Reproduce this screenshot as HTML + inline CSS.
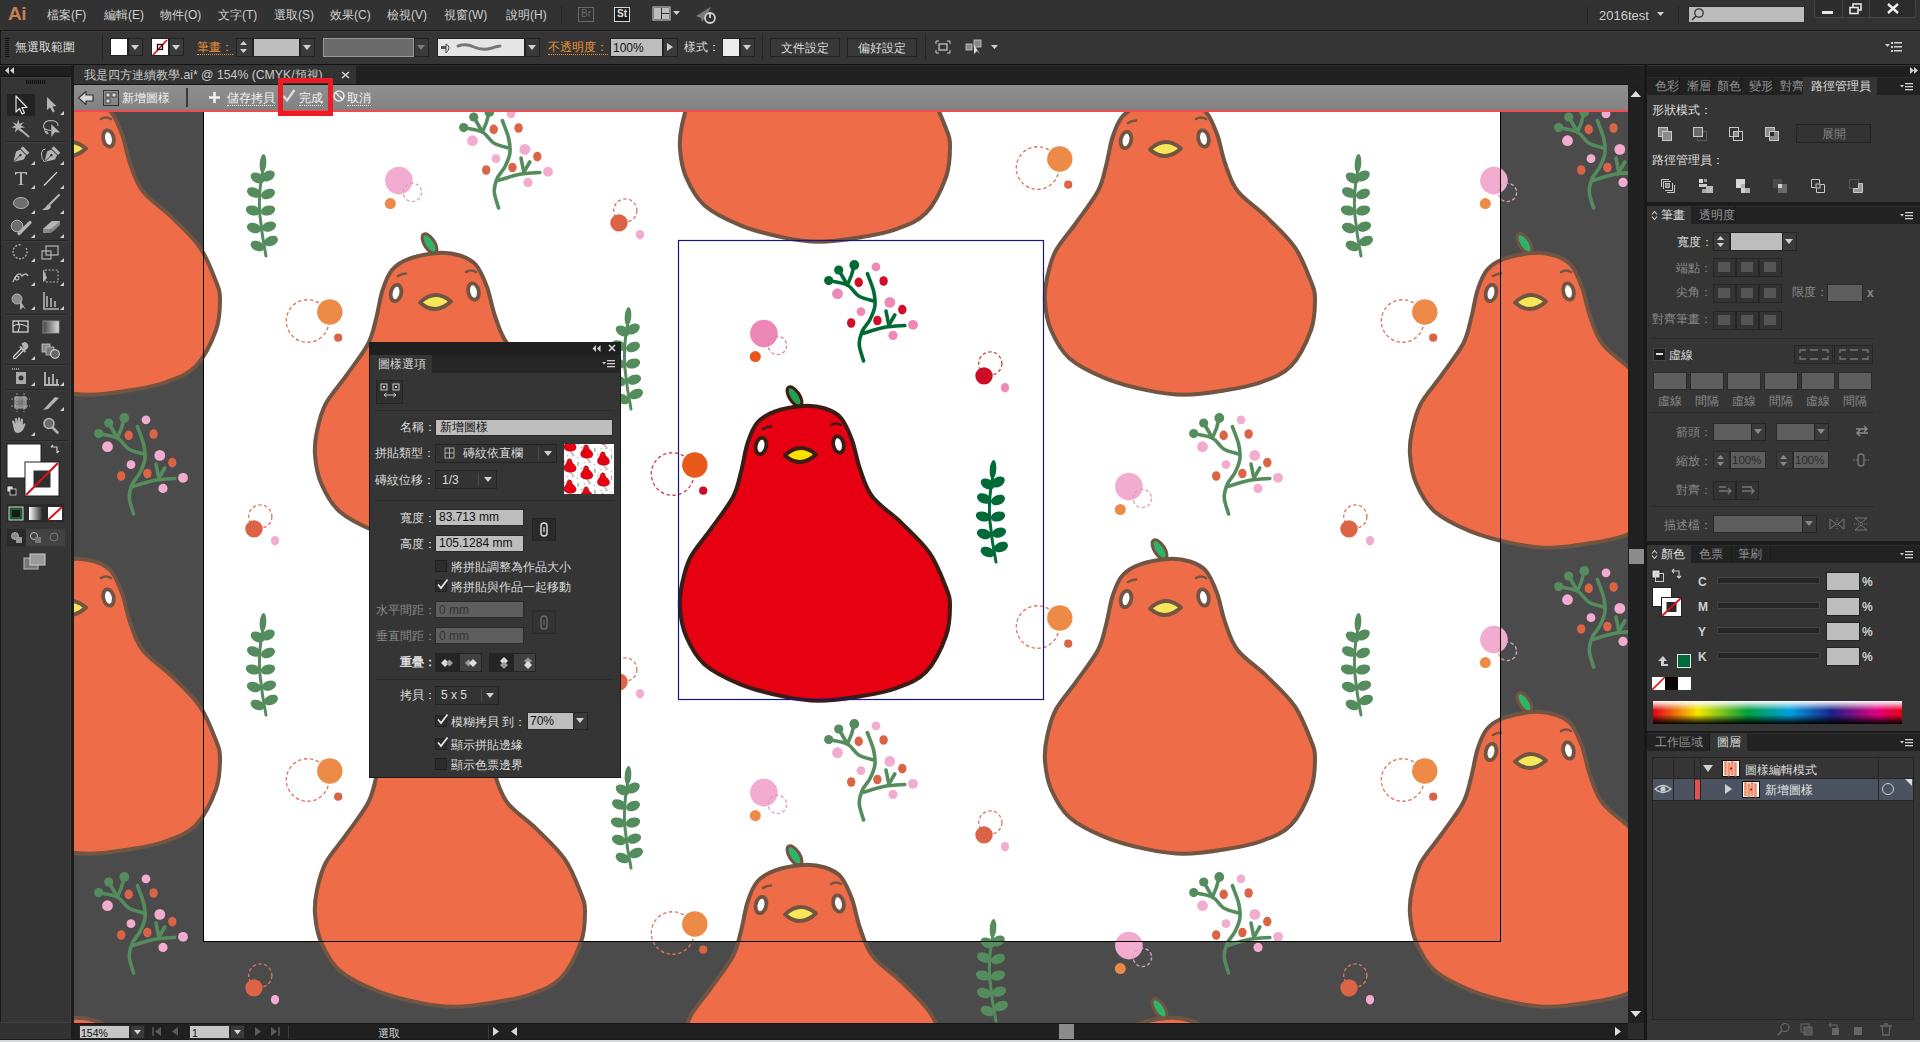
<!DOCTYPE html>
<html><head><meta charset="utf-8">
<style>
*{margin:0;padding:0;box-sizing:border-box}
html,body{width:1920px;height:1042px;overflow:hidden;background:#323232;font-family:"Liberation Sans",sans-serif;font-size:12px;color:#d0d0d0}
.a{position:absolute}
.t{position:absolute;white-space:nowrap;line-height:1}
</style></head><body>
<!-- MENU BAR -->
<div class="a" style="left:0;top:0;width:1920px;height:30px;background:#323232"></div>
<div class="a" style="left:0;top:30px;width:1920px;height:1px;background:#1b1b1b"></div>
<div class="t" style="left:8px;top:4px;font-size:19px;font-weight:bold;color:#c47f56;letter-spacing:-0.5px">Ai</div>
<div class="t" style="left:47px;top:9px;font-size:12px;color:#cfcfcf">檔案(F)</div>
<div class="t" style="left:104px;top:9px;font-size:12px;color:#cfcfcf">編輯(E)</div>
<div class="t" style="left:160px;top:9px;font-size:12px;color:#cfcfcf">物件(O)</div>
<div class="t" style="left:218px;top:9px;font-size:12px;color:#cfcfcf">文字(T)</div>
<div class="t" style="left:274px;top:9px;font-size:12px;color:#cfcfcf">選取(S)</div>
<div class="t" style="left:330px;top:9px;font-size:12px;color:#cfcfcf">效果(C)</div>
<div class="t" style="left:387px;top:9px;font-size:12px;color:#cfcfcf">檢視(V)</div>
<div class="t" style="left:444px;top:9px;font-size:12px;color:#cfcfcf">視窗(W)</div>
<div class="t" style="left:506px;top:9px;font-size:12px;color:#cfcfcf">說明(H)</div>
<div class="a" style="left:561px;top:6px;width:1px;height:18px;background:#262626"></div>
<div class="a" style="left:578px;top:7px;width:16px;height:15px;border:1px solid #6a6a6a"></div>
<div class="t" style="left:581px;top:9px;font-size:10px;color:#6a6a6a">Br</div>
<div class="a" style="left:614px;top:7px;width:16px;height:15px;border:1px solid #d6d6d6;background:#1e1e1e"></div>
<div class="t" style="left:617px;top:9px;font-size:10px;font-weight:bold;color:#e0e0e0">St</div>
<svg class="a" style="left:652px;top:6px" width="30" height="16"><rect x="1" y="1" width="17" height="13" fill="none" stroke="#d0d0d0" stroke-width="1"/><rect x="2" y="2" width="7" height="11" fill="#bdbdbd"/><rect x="10" y="2" width="7" height="5" fill="#bdbdbd"/><rect x="10" y="8" width="7" height="5" fill="#bdbdbd"/><path d="M21,5 L28,5 L24.5,9Z" fill="#d0d0d0"/></svg>
<svg class="a" style="left:695px;top:5px" width="24" height="20"><path d="M1,11 L6,8 L12,4 L16,2 L14,6 L10,12 L7,17 L6,13Z" fill="#7a7a7a"/><circle cx="15" cy="13" r="5" fill="none" stroke="#cfcfcf" stroke-width="1.8"/><path d="M15,7 L15,13" stroke="#cfcfcf" stroke-width="1.8"/></svg>
<div class="a" style="left:1587px;top:6px;width:1px;height:18px;background:#262626"></div>
<div class="t" style="left:1599px;top:9px;font-size:13px;color:#cfcfcf">2016test</div>
<svg class="a" style="left:1657px;top:12px" width="8" height="6"><path d="M0,0 L7,0 L3.5,4Z" fill="#cfcfcf"/></svg>
<div class="a" style="left:1678px;top:6px;width:1px;height:18px;background:#262626"></div>
<div class="a" style="left:1688px;top:6px;width:117px;height:17px;background:#bcbcbc;border:1px solid #2a2a2a"></div>
<svg class="a" style="left:1690px;top:7px" width="16" height="16"><circle cx="9" cy="6" r="4.2" fill="none" stroke="#333" stroke-width="1.3"/><path d="M6,9 L2,13" stroke="#333" stroke-width="1.5"/></svg>
<div class="a" style="left:1814px;top:0;width:102px;height:18px;background:#2c2c2c;border:1px solid #454545;border-top:none;border-radius:0 0 3px 3px"></div>
<div class="a" style="left:1842px;top:0;width:1px;height:17px;background:#454545"></div>
<div class="a" style="left:1869px;top:0;width:1px;height:17px;background:#454545"></div>
<div class="a" style="left:1822px;top:11px;width:11px;height:3px;background:#e6e6e6"></div>
<svg class="a" style="left:1849px;top:3px" width="14" height="12"><rect x="4" y="1" width="8" height="6" fill="none" stroke="#e6e6e6" stroke-width="1.6"/><rect x="1" y="4.5" width="8" height="6" fill="#2c2c2c" stroke="#e6e6e6" stroke-width="1.6"/></svg>
<svg class="a" style="left:1886px;top:3px" width="14" height="12"><path d="M2,1 L12,10 M12,1 L2,10" stroke="#f0f0f0" stroke-width="2.4"/></svg>
<!-- CONTROL BAR -->
<div class="a" style="left:0;top:31px;width:1920px;height:33px;background:#353535"></div>
<div class="a" style="left:0;top:31px;width:1920px;height:1px;background:#3d3d3d"></div>
<div class="a" style="left:0;top:64px;width:1920px;height:1px;background:#131313"></div>
<div class="a" style="left:0;top:31px;width:1px;height:33px;background:#1a1a1a"></div>
<div class="a" style="left:5px;top:38px;width:4px;height:19px;background:repeating-linear-gradient(#111 0 1px,transparent 1px 2px)"></div>
<div class="t" style="left:15px;top:41px;font-size:12px;color:#dcdcdc">無選取範圍</div>
<div class="a" style="left:102px;top:35px;width:1px;height:25px;background:#262626"></div>
<div class="a" style="left:110px;top:38px;width:18px;height:18px;background:#fff;border:1px solid #222"></div>
<div class="a" style="left:128px;top:38px;width:15px;height:18px;background:#3a3a3a;border:1px solid #222"></div>
<svg class="a" style="left:131px;top:45px" width="9" height="6"><path d="M0,0 L8,0 L4,5Z" fill="#d0d0d0"/></svg>
<div class="a" style="left:151px;top:38px;width:18px;height:18px;background:#fff;border:1px solid #222"></div>
<svg class="a" style="left:151px;top:38px" width="18" height="18"><path d="M2,17 L16,2" stroke="#e01010" stroke-width="1.8"/><rect x="6.5" y="6.5" width="5" height="5" fill="none" stroke="#111" stroke-width="1.3"/></svg>
<div class="a" style="left:169px;top:38px;width:15px;height:18px;background:#3a3a3a;border:1px solid #222"></div>
<svg class="a" style="left:172px;top:45px" width="9" height="6"><path d="M0,0 L8,0 L4,5Z" fill="#d0d0d0"/></svg>
<div class="t" style="left:197px;top:41px;font-size:12px;color:#e8913a;border-bottom:1px dotted #e8913a;padding-bottom:1px">筆畫：</div>
<div class="a" style="left:236px;top:38px;width:17px;height:19px;background:#3a3a3a;border:1px solid #222"></div>
<svg class="a" style="left:239px;top:40px" width="10" height="15"><path d="M1,5 L8,5 L4.5,1Z M1,9 L8,9 L4.5,13Z" fill="#d0d0d0"/></svg>
<div class="a" style="left:253px;top:38px;width:47px;height:19px;background:#bdbdbd;border:1px solid #222"></div>
<div class="a" style="left:300px;top:38px;width:15px;height:19px;background:#3a3a3a;border:1px solid #222"></div>
<svg class="a" style="left:303px;top:45px" width="9" height="6"><path d="M0,0 L8,0 L4,5Z" fill="#d0d0d0"/></svg>
<div class="a" style="left:323px;top:38px;width:91px;height:19px;background:#6a6a6a;border:1px solid #9a9a9a"></div>
<div class="a" style="left:414px;top:38px;width:15px;height:19px;background:#3a3a3a;border:1px solid #222"></div>
<svg class="a" style="left:417px;top:45px" width="9" height="6"><path d="M0,0 L8,0 L4,5Z" fill="#7a7a7a"/></svg>
<div class="a" style="left:437px;top:38px;width:88px;height:19px;background:#e6e6e6;border:1px solid #222"></div>
<svg class="a" style="left:438px;top:39px" width="86" height="17"><path d="M3,10 L8,10 L8,7 L3,7Z" fill="#555"/><path d="M8,5 Q14,8 8,14 Z" fill="none" stroke="#444" stroke-width="1"/><path d="M20,7 Q28,4 36,8 Q44,12 54,9 Q60,7 62,7" fill="none" stroke="#777" stroke-width="3" stroke-linecap="round"/></svg>
<div class="a" style="left:525px;top:38px;width:15px;height:19px;background:#3a3a3a;border:1px solid #222"></div>
<svg class="a" style="left:528px;top:45px" width="9" height="6"><path d="M0,0 L8,0 L4,5Z" fill="#d0d0d0"/></svg>
<div class="t" style="left:548px;top:41px;font-size:12px;color:#e8913a;border-bottom:1px dotted #e8913a;padding-bottom:1px">不透明度：</div>
<div class="a" style="left:610px;top:38px;width:53px;height:19px;background:#bdbdbd;border:1px solid #222"></div>
<div class="t" style="left:613px;top:42px;font-size:12px;color:#111">100%</div>
<div class="a" style="left:663px;top:38px;width:15px;height:19px;background:#3a3a3a;border:1px solid #222"></div>
<svg class="a" style="left:667px;top:43px" width="7" height="9"><path d="M0,0 L6,4 L0,8Z" fill="#d0d0d0"/></svg>
<div class="t" style="left:684px;top:41px;font-size:12px;color:#dcdcdc">樣式：</div>
<div class="a" style="left:722px;top:38px;width:18px;height:19px;background:#ececec;border:1px solid #222"></div>
<div class="a" style="left:740px;top:38px;width:15px;height:19px;background:#3a3a3a;border:1px solid #222"></div>
<svg class="a" style="left:743px;top:45px" width="9" height="6"><path d="M0,0 L8,0 L4,5Z" fill="#d0d0d0"/></svg>
<div class="a" style="left:762px;top:35px;width:1px;height:25px;background:#262626"></div>
<div class="a" style="left:770px;top:38px;width:70px;height:19px;background:#383838;border:1px solid #222"></div>
<div class="t" style="left:781px;top:42px;font-size:12px;color:#dcdcdc">文件設定</div>
<div class="a" style="left:847px;top:38px;width:70px;height:19px;background:#383838;border:1px solid #222"></div>
<div class="t" style="left:858px;top:42px;font-size:12px;color:#dcdcdc">偏好設定</div>
<div class="a" style="left:925px;top:35px;width:1px;height:25px;background:#262626"></div>
<svg class="a" style="left:935px;top:40px" width="16" height="14"><path d="M1,4 L1,1 L4,1 M12,1 L15,1 L15,4 M15,10 L15,13 L12,13 M4,13 L1,13 L1,10" fill="none" stroke="#cfcfcf" stroke-width="1"/><rect x="4" y="4" width="8" height="6" fill="none" stroke="#cfcfcf" stroke-width="1.2"/></svg>
<svg class="a" style="left:965px;top:39px" width="34" height="16"><rect x="1" y="5" width="6" height="6" fill="#888" stroke="#ccc" stroke-width="0.8"/><rect x="9" y="1" width="7" height="7" fill="#888" stroke="#ccc" stroke-width="0.8"/><path d="M9,6 L9,15 L12,12 L15,15Z" fill="#ddd"/><path d="M26,6 L33,6 L29.5,10Z" fill="#d0d0d0"/></svg>
<svg class="a" style="left:1884px;top:41px" width="20" height="12"><path d="M1,3 L6,3 L3.5,6Z" fill="#cfcfcf"/><rect x="7" y="1" width="2" height="2" fill="#cfcfcf"/><rect x="7" y="5" width="2" height="2" fill="#cfcfcf"/><rect x="7" y="9" width="2" height="2" fill="#cfcfcf"/><rect x="10" y="1" width="8" height="1.5" fill="#cfcfcf"/><rect x="10" y="5" width="8" height="1.5" fill="#cfcfcf"/><rect x="10" y="9" width="8" height="1.5" fill="#cfcfcf"/></svg>
<!-- DOC TAB ROW -->
<div class="a" style="left:0;top:65px;width:1646px;height:20px;background:#212121"></div>
<div class="a" style="left:0;top:65px;width:1646px;height:1px;background:#2e2e2e"></div>
<div class="a" style="left:74px;top:65px;width:282px;height:20px;background:#333333"></div>
<div class="t" style="left:84px;top:69px;font-size:12.25px;color:#c8c8c8">我是四方連續教學.ai* @ 154% (CMYK/預視)</div>
<svg class="a" style="left:341px;top:71px" width="9" height="8"><path d="M1,1 L8,7 M8,1 L1,7" stroke="#d8d8d8" stroke-width="1.5"/></svg>
<!-- pattern edit bar -->
<div class="a" style="left:74px;top:84px;width:1554px;height:1px;background:#151515"></div>
<div class="a" style="left:74px;top:85px;width:1554px;height:25px;background:linear-gradient(#8f8f8f,#828282)"></div>
<div class="a" style="left:74px;top:110px;width:1554px;height:2px;background:#f0494f"></div>
<svg class="a" style="left:77px;top:90px" width="19" height="16"><path d="M1.5,8 L9,1.5 L9,5 L16,5 L16,11 L9,11 L9,14.5Z" fill="#d6d6d6" stroke="#333" stroke-width="1.2" stroke-linejoin="round"/></svg>
<svg class="a" style="left:103px;top:90px" width="16" height="16"><rect x="0.5" y="0.5" width="15" height="15" fill="none" stroke="#333" stroke-width="1"/><rect x="3" y="3" width="4" height="4" fill="#ddd" stroke="#333" stroke-width="0.8"/><rect x="9" y="3" width="4" height="4" fill="#ddd" stroke="#333" stroke-width="0.8"/><rect x="3" y="9" width="4" height="4" fill="#ddd" stroke="#333" stroke-width="0.8"/></svg>
<div class="t" style="left:122px;top:92px;font-size:12px;color:#f2f2f2">新增圖樣</div>
<div class="a" style="left:186px;top:88px;width:2px;height:19px;background:#3a3a3a"></div>
<svg class="a" style="left:208px;top:91px" width="13" height="13"><path d="M6.5,1 L6.5,12 M1,6.5 L12,6.5" stroke="#f0f0f0" stroke-width="2.6"/></svg>
<div class="t" style="left:227px;top:92px;font-size:12px;color:#f2f2f2;border-bottom:1px dotted #f2f2f2;padding-bottom:1px">儲存拷貝</div>
<svg class="a" style="left:282px;top:88px" width="14" height="15"><path d="M1.5,8 L5,12.5 L12.5,2" fill="none" stroke="#e0e0e0" stroke-width="2.2"/></svg>
<div class="t" style="left:299px;top:92px;font-size:12px;color:#f2f2f2;border-bottom:1px dotted #f2f2f2;padding-bottom:1px">完成</div>
<svg class="a" style="left:332px;top:89px" width="14" height="14"><circle cx="7" cy="7" r="5" fill="none" stroke="#e8e8e8" stroke-width="1.6"/><path d="M3.5,3.5 L10.5,10.5" stroke="#e8e8e8" stroke-width="1.6"/></svg>
<div class="t" style="left:347px;top:92px;font-size:12px;color:#f2f2f2;border-bottom:1px dotted #f2f2f2;padding-bottom:1px">取消</div>
<div class="a" style="left:278px;top:78px;width:55px;height:38px;border:5px solid #ec1b24;z-index:5"></div>
<!-- LEFT TOOLBAR -->
<div class="a" style="left:0;top:65px;width:71px;height:12px;background:#1f1f1f"></div>
<div class="a" style="left:0;top:65px;width:71px;height:1px;background:#383838"></div>
<div class="a" style="left:0;top:76px;width:71px;height:1px;background:#151515"></div>
<svg class="a" style="left:4px;top:67px" width="12" height="8"><path d="M5,0 L1,3.5 L5,7Z M10,0 L6,3.5 L10,7Z" fill="#cfcfcf"/></svg>
<div class="a" style="left:0;top:77px;width:71px;height:946px;background:#353535;border:1px solid #404040;border-left:1px solid #1a1a1a"></div>
<div class="a" style="left:26px;top:80px;width:20px;height:4px;background:repeating-linear-gradient(90deg,#0e0e0e 0 1px,transparent 1px 2px)"></div>
<div class="a" style="left:7px;top:94px;width:28px;height:22px;background:#232323"></div>
<svg class="a" style="left:0;top:77px" width="71" height="520" viewBox="0 77 71 520">
<rect x="6" y="141" width="60" height="1" fill="#262626"/><rect x="6" y="142" width="60" height="1" fill="#3e3e3e"/>
<rect x="6" y="240" width="60" height="1" fill="#262626"/><rect x="6" y="241" width="60" height="1" fill="#3e3e3e"/>
<rect x="6" y="314" width="60" height="1" fill="#262626"/><rect x="6" y="315" width="60" height="1" fill="#3e3e3e"/>
<rect x="6" y="364" width="60" height="1" fill="#262626"/><rect x="6" y="365" width="60" height="1" fill="#3e3e3e"/>
<rect x="6" y="389" width="60" height="1" fill="#262626"/><rect x="6" y="390" width="60" height="1" fill="#3e3e3e"/>
<rect x="6" y="440" width="60" height="1" fill="#262626"/><rect x="6" y="441" width="60" height="1" fill="#3e3e3e"/>
<path d="M60,115 L64,115 L64,111Z" fill="#cfcfcf"/>
<path d="M31,165 L35,165 L35,161Z" fill="#cfcfcf"/>
<path d="M60,165 L64,165 L64,161Z" fill="#cfcfcf"/>
<path d="M31,189 L35,189 L35,185Z" fill="#cfcfcf"/>
<path d="M60,189 L64,189 L64,185Z" fill="#cfcfcf"/>
<path d="M31,214 L35,214 L35,210Z" fill="#cfcfcf"/>
<path d="M60,214 L64,214 L64,210Z" fill="#cfcfcf"/>
<path d="M31,238 L35,238 L35,234Z" fill="#cfcfcf"/>
<path d="M60,238 L64,238 L64,234Z" fill="#cfcfcf"/>
<path d="M31,262 L35,262 L35,258Z" fill="#cfcfcf"/>
<path d="M60,262 L64,262 L64,258Z" fill="#cfcfcf"/>
<path d="M31,286 L35,286 L35,282Z" fill="#cfcfcf"/>
<path d="M60,286 L64,286 L64,282Z" fill="#cfcfcf"/>
<path d="M31,310 L35,310 L35,306Z" fill="#cfcfcf"/>
<path d="M60,310 L64,310 L64,306Z" fill="#cfcfcf"/>
<path d="M31,360 L35,360 L35,356Z" fill="#cfcfcf"/>
<path d="M31,386 L35,386 L35,382Z" fill="#cfcfcf"/>
<path d="M60,386 L64,386 L64,382Z" fill="#cfcfcf"/>
<path d="M60,411 L64,411 L64,407Z" fill="#cfcfcf"/>
<path d="M31,436 L35,436 L35,432Z" fill="#cfcfcf"/>
<path d="M16,96 L16,112 L19.5,108.5 L22,114 L24.5,113 L22,107.5 L27,107.5Z" fill="none" stroke="#e0e0e0" stroke-width="1.2" stroke-linejoin="round"/>
<path d="M47,97 L47,110 L50,107.6 L53,112.5 L54.8,111.3 L52.5,106.6 L56.3,106Z" fill="#b4b4b4"/>
<path d="M21,130 L28.5,136.5" stroke="#b4b4b4" stroke-width="1.8" stroke-linecap="round"/>
<path d="M18.2,119.5 L19.6,124 L24,122 L21,125.6 L25,127.5 L20.6,128 L21.5,132.5 L18.2,129.3 L14.9,132.5 L15.8,128 L11.4,127.5 L15.4,125.6 L12.4,122 L16.8,124Z" fill="#b4b4b4"/>
<path d="M51,130.5 Q43,130 43.5,125.5 Q44.5,120.5 51,120.5 Q58.5,121 58,126 M44.5,128.5 Q45,134 48,133.5 Q47,131 45.5,131.5" fill="none" stroke="#b4b4b4" stroke-width="1.1"/>
<path d="M51.3,124.2 L60.2,132.5 L55,132.3 L51.3,137Z" fill="#b4b4b4"/>
<g transform="translate(20.0,155.5) rotate(45) scale(1.1)"><path d="M0,8.5 L-5,0 L-3.8,-4 L3.8,-4 L5,0Z" fill="#b4b4b4"/><rect x="-4.2" y="-7.8" width="8.4" height="3" fill="#b4b4b4"/><circle cx="0" cy="-0.5" r="1.2" fill="#333"/><path d="M0,8.5 L0,0.5" stroke="#333" stroke-width="0.8"/></g>
<g transform="translate(51.0,155.5) rotate(45) scale(1.1)"><path d="M0,8.5 L-5,0 L-3.8,-4 L3.8,-4 L5,0Z" fill="#b4b4b4"/><rect x="-4.2" y="-7.8" width="8.4" height="3" fill="#b4b4b4"/><circle cx="0" cy="-0.5" r="1.2" fill="#333"/><path d="M0,8.5 L0,0.5" stroke="#333" stroke-width="0.8"/></g>
<path d="M45.5,149 Q42,149 41.5,153 Q41,159 44.5,162" fill="none" stroke="#b4b4b4" stroke-width="1"/>
<path d="M15,172 L27,172 L27,175 L26.3,175 Q26,173.3 24,173.3 L22,173.3 L22,184 L23.5,184.5 L23.5,185 L18.5,185 L18.5,184.5 L20,184 L20,173.3 L18,173.3 Q16,173.3 15.7,175 L15,175Z" fill="#b4b4b4"/>
<path d="M44,185.5 L57,172.2" stroke="#e0e0e0" stroke-width="1.2"/>
<ellipse cx="21" cy="203" rx="7.5" ry="5.5" fill="#6e6e6e" stroke="#b4b4b4" stroke-width="1"/>
<path d="M42,209.5 Q45,209 46.5,206 Q48,203.5 50.5,205.5 Q51.5,208 48.5,209.5 Q45.5,210.5 42,209.5Z" fill="#b4b4b4"/><path d="M49.5,204.5 L59,195" stroke="#b4b4b4" stroke-width="2.2" stroke-linecap="round"/>
<circle cx="17" cy="226" r="5.8" fill="#6e6e6e" stroke="#b4b4b4" stroke-width="1"/><path d="M19,233.5 L30,222.5" stroke="#b4b4b4" stroke-width="3.2" stroke-linecap="round"/>
<path d="M43,233 L43,229 L52,221 L60,221 L60,225 L51,233Z" fill="#8a8a8a"/><path d="M43,229 L52,221 L60,221 L51,229Z" fill="#b4b4b4"/><path d="M51,229 L51,233" stroke="#555" stroke-width="0.8"/>
<path d="M26,248 A7,7 0 1 1 22,245" fill="none" stroke="#b4b4b4" stroke-width="1.3" stroke-dasharray="2 1.5"/>
<rect x="42" y="251" width="9" height="8" fill="none" stroke="#b4b4b4" stroke-width="1.2"/><rect x="46" y="246" width="12" height="9" fill="none" stroke="#b4b4b4" stroke-width="1.2"/>
<path d="M13,282 Q18,270 22,276 Q26,272 28,276" fill="none" stroke="#b4b4b4" stroke-width="1.5"/><circle cx="17" cy="278" r="2" fill="none" stroke="#e0e0e0"/>
<rect x="45" y="270" width="13" height="12" fill="none" stroke="#b4b4b4" stroke-width="1" stroke-dasharray="2 1.5"/><path d="M43,269 L43,282 L47,278Z" fill="#b4b4b4"/>
<circle cx="17" cy="299" r="5" fill="#8a8a8a" stroke="#b4b4b4"/><path d="M20,300 L20,310 L23,307 L26,310Z" fill="#b4b4b4"/>
<path d="M44,292 L44,309 L59,309 M47,296 L47,307 M51,298 L51,307 M55,301 L55,307" fill="none" stroke="#b4b4b4" stroke-width="1.6"/>
<rect x="13" y="321" width="15" height="11" fill="none" stroke="#e0e0e0" stroke-width="1.2"/><path d="M13,326 Q20,322 28,327 M18,321 Q21,327 18,332" fill="none" stroke="#e0e0e0" stroke-width="1"/>
<defs><linearGradient id="gr1"><stop offset="0" stop-color="#444"/><stop offset="1" stop-color="#ddd"/></linearGradient></defs><rect x="43" y="321" width="16" height="12" fill="url(#gr1)" stroke="#999" stroke-width="0.8"/>
<path d="M14,358.5 L13.5,356.5 L21.5,348.5 L23.5,350.5 L15.5,358.5Z" fill="none" stroke="#e0e0e0" stroke-width="1.1"/>
<path d="M20,346.5 L25.5,352 M22,344.5 Q24,342 26.5,344 Q28.5,346.5 26,348.5 L24,350" fill="#b4b4b4" stroke="#b4b4b4" stroke-width="2"/>
<rect x="42" y="344" width="8" height="8" fill="#8a8a8a" stroke="#ccc" stroke-width="0.8"/><rect x="46" y="347" width="8" height="8" fill="#777" stroke="#bbb" stroke-width="0.8"/><circle cx="55" cy="354" r="4.3" fill="#666" stroke="#ddd" stroke-width="1.1"/>
<rect x="16" y="372" width="10" height="12" fill="#aaa"/><circle cx="21" cy="378" r="2.5" fill="#333"/><path d="M12,369 L19,369" stroke="#bbb" stroke-width="1.5" stroke-dasharray="1 1"/>
<path d="M44,385 L59,385 M45,372 L45,384 M49,377 L49,384 M53,374 L53,384 M57,379 L57,384" fill="none" stroke="#b4b4b4" stroke-width="1.8"/>
<rect x="15" y="397" width="11" height="11" fill="#777" stroke="#b4b4b4" stroke-width="1"/><path d="M11,399 L30,399 M11,406 L30,406 M17,393 L17,412 M24,393 L24,412" stroke="#b4b4b4" stroke-width="0.8" stroke-dasharray="2 1"/>
<path d="M43,410 L55,397 L59,398 L48,409Z" fill="#b4b4b4"/>
<path d="M13,425 L12,421.5 Q12.5,420 14,421 L15.5,424 L15,419 Q15.5,417.5 17,418.5 L17.8,423 L18,418 Q19,416.5 20,418 L20.3,423 L21,419 Q22,418 23,419.3 L22.8,425 L24,423.5 Q25.5,423 25.5,424.5 L23,430 Q21,433 18,433 Q15,433 14,430Z" fill="#b4b4b4"/>
<circle cx="49" cy="423.5" r="5" fill="#6a6a6a" stroke="#b4b4b4" stroke-width="1.6"/><path d="M52.5,427.5 L57.5,432.5" stroke="#b4b4b4" stroke-width="2.6" stroke-linecap="round"/>
<rect x="7" y="444" width="34" height="34" fill="#fff" stroke="#222" stroke-width="1"/>
<rect x="25" y="462" width="34" height="34" fill="#fff" stroke="#222" stroke-width="1"/><rect x="33.5" y="470.5" width="17" height="17" fill="#2e2e2e"/>
<path d="M26,495 L58,463" stroke="#d41414" stroke-width="2.2"/>
<path d="M51,447 L57,447 L57,453 M51,447 L53,445 M57,453 L59,451" fill="none" stroke="#ccc" stroke-width="1.2"/>
<rect x="7" y="486" width="6" height="6" fill="#ddd" stroke="#222" stroke-width="0.8"/><rect x="10" y="489" width="6" height="6" fill="#222" stroke="#ddd" stroke-width="0.8"/>
<rect x="7" y="504" width="57" height="18" fill="#2a2a2a"/>
<rect x="9" y="507" width="14" height="13" fill="#1e5c34" stroke="#cfcfcf" stroke-width="1"/><rect x="12" y="510" width="8" height="7" fill="#1a1a1a"/>
<rect x="29" y="507" width="14" height="13" fill="url(#gr2)"/><defs><linearGradient id="gr2"><stop offset="0" stop-color="#fff"/><stop offset="1" stop-color="#222"/></linearGradient></defs>
<rect x="48" y="507" width="14" height="13" fill="#fff"/><path d="M48,520 L62,507" stroke="#d41414" stroke-width="2"/>
<rect x="7" y="529" width="58" height="17" fill="#424242"/><rect x="7" y="529" width="19" height="17" fill="#2a2a2a"/>
<circle cx="15" cy="536" r="3.5" fill="#888" stroke="#bbb" stroke-width="0.8"/><rect x="16" y="537" width="6" height="6" fill="#999"/>
<circle cx="34" cy="536" r="3.5" fill="none" stroke="#bbb" stroke-width="1"/><rect x="35" y="537" width="6" height="6" fill="#777"/>
<circle cx="54" cy="537" r="4" fill="none" stroke="#777" stroke-width="1"/>
<rect x="24" y="558" width="14" height="11" fill="#777" stroke="#bbb" stroke-width="1"/><rect x="30" y="554" width="15" height="11" fill="#999" stroke="#ccc" stroke-width="1"/>
</svg>
<div class="a" style="left:71px;top:64px;width:3px;height:978px;background:#1c1c1c"></div>
<!-- CANVAS -->
<svg width="1554" height="911" viewBox="74 112 1554 911" style="position:absolute;left:74px;top:112px;display:block">
<defs><g id="tc"><g transform="translate(1,166)">
<ellipse cx="115.5" cy="-9.5" rx="11" ry="5.2" transform="rotate(57 115.5 -9.5)" fill="#2eb46a" stroke="#725443" stroke-width="3"/>
<path d="M124.0,0.0 C115.6,0.5 103.2,2.9 95.5,5.7 C87.8,8.5 82.5,11.8 78.0,17.0 C73.5,22.2 71.3,28.8 68.6,37.0 C65.9,45.2 64.4,57.0 62.0,66.0 C59.6,75.0 59.0,81.5 54.0,91.0 C49.0,100.5 39.1,113.0 32.0,123.0 C24.9,133.0 16.4,141.8 11.6,151.0 C6.8,160.2 4.8,169.5 3.0,178.0 C1.2,186.5 0.3,193.3 1.0,202.0 C1.7,210.7 3.0,220.6 7.0,230.0 C11.1,239.4 16.2,250.1 25.3,258.2 C34.4,266.2 48.4,272.9 61.5,278.3 C74.6,283.7 90.7,287.6 103.8,290.4 C116.9,293.1 127.3,294.8 140.0,294.8 C152.7,294.8 167.2,292.6 180.0,290.5 C192.8,288.4 205.5,286.4 216.7,282.3 C227.8,278.2 238.5,274.9 246.9,266.2 C255.3,257.5 263.0,241.1 267.0,230.0 C271.0,218.9 271.0,207.8 271.0,199.7 C271.0,191.6 270.4,190.3 267.0,181.6 C263.6,172.9 258.3,158.1 250.9,147.3 C243.5,136.6 232.2,126.5 222.7,117.1 C213.1,107.7 200.5,100.0 193.6,91.0 C186.7,82.0 184.4,72.5 181.0,63.0 C177.6,53.5 176.2,42.5 173.0,34.0 C169.8,25.5 166.5,17.2 162.0,12.0 C157.5,6.8 152.3,4.5 146.0,2.5 C139.7,0.5 132.4,-0.5 124.0,0.0Z" fill="#ee6c48" stroke="#725443" stroke-width="4" stroke-linejoin="round"/>
<ellipse cx="82" cy="40" rx="5.2" ry="8.3" transform="rotate(12 82 40)" fill="#fff" stroke="#725443" stroke-width="3.8"/>
<ellipse cx="159.5" cy="38.5" rx="5.2" ry="8.3" transform="rotate(-12 159.5 38.5)" fill="#fff" stroke="#725443" stroke-width="3.8"/>
<path d="M106,49.5 Q121,35 137,48.5 Q121,63 106,49.5Z" fill="#f6e65a" stroke="#725443" stroke-width="3.8" stroke-linejoin="round"/>
<path d="M84,23 Q88,20.5 92,20.5" fill="none" stroke="#725443" stroke-width="2.6" stroke-linecap="round"/>
<path d="M152,19 Q157,16 162,19" fill="none" stroke="#725443" stroke-width="2.6" stroke-linecap="round"/>
</g>
<g fill="none" stroke="#558c5d" stroke-width="3.6" stroke-linecap="round">
<path d="M185.6,121.0 C184.9,118.3 181.5,109.8 181.3,104.8 C181.1,99.8 182.6,95.2 184.4,91.0 C186.2,86.8 189.8,84.0 191.9,79.8 C194.0,75.6 196.3,70.8 196.9,66.0 C197.5,61.2 196.8,56.4 195.6,51.0 C194.3,45.6 190.4,36.6 189.4,33.7"/>
<path d="M195.6,61.0 C193.1,60.2 185.1,58.7 180.7,56.0 C176.3,53.3 174.4,47.6 169.4,45.0 C164.4,42.4 153.8,41.3 150.7,40.6"/>
<path d="M169.4,45 L161.3,31"/><path d="M169.4,45 Q174,36 176,26"/>
<path d="M184.4,93.6 C188.2,92.5 199.8,88.6 206.9,87.3 C214.0,86.0 223.5,85.8 226.8,85.5"/>
<path d="M208,71 L210.6,84"/><path d="M216.8,75 L211.5,84"/>
</g>
<g fill="#558c5d"><circle cx="150.7" cy="40.6" r="4.6"/><circle cx="160.7" cy="30" r="4.6"/><circle cx="176.3" cy="25" r="4.9"/></g>
<g fill="#dc6446">
<ellipse cx="180.7" cy="42.4" rx="4.2" ry="4.8"/>
<ellipse cx="205.6" cy="41" rx="4.2" ry="4.8"/>
<ellipse cx="173.2" cy="83" rx="4.2" ry="4.8"/>
<ellipse cx="199.4" cy="80.5" rx="4.2" ry="4.8"/>
<ellipse cx="224.3" cy="69.6" rx="4.2" ry="4.8"/>
</g><g fill="#f2acd0">
<circle cx="198" cy="26.8" r="4.4"/>
<circle cx="159.5" cy="53.7" r="5.4"/>
<circle cx="211.8" cy="62.4" r="5.4"/>
<circle cx="183" cy="71.7" r="4.4"/>
<circle cx="235" cy="84.8" r="4.9"/>
<circle cx="215" cy="95.4" r="4.6"/>
</g>
<g fill="#558c5d">
<path d="M314.5,238 Q310,262 312,282 Q314,302 318,322" fill="none" stroke="#558c5d" stroke-width="3" stroke-linecap="round"/>
<ellipse cx="315" cy="229.5" rx="3.3" ry="9.5" transform="rotate(4 315 229.5)"/>
<ellipse cx="309.5" cy="244.0" rx="7.3" ry="4.9" transform="rotate(30 309.5 244.0)"/>
<ellipse cx="320.0" cy="242.0" rx="7.3" ry="4.9" transform="rotate(-30 320.0 242.0)"/>
<ellipse cx="306.0" cy="258.5" rx="7.3" ry="4.9" transform="rotate(22 306.0 258.5)"/>
<ellipse cx="320.0" cy="260.0" rx="7.3" ry="4.9" transform="rotate(-22 320.0 260.0)"/>
<ellipse cx="305.0" cy="276.5" rx="7.3" ry="4.9" transform="rotate(15 305.0 276.5)"/>
<ellipse cx="320.0" cy="276.5" rx="7.3" ry="4.9" transform="rotate(-15 320.0 276.5)"/>
<ellipse cx="306.0" cy="294.0" rx="7.3" ry="4.9" transform="rotate(18 306.0 294.0)"/>
<ellipse cx="321.0" cy="292.6" rx="7.3" ry="4.9" transform="rotate(-18 321.0 292.6)"/>
<ellipse cx="309.6" cy="312.0" rx="7.3" ry="4.9" transform="rotate(22 309.6 312.0)"/>
<ellipse cx="323.0" cy="307.0" rx="7.3" ry="4.9" transform="rotate(-22 323.0 307.0)"/>
</g>
<circle cx="85.9" cy="93.6" r="13.8" fill="#f2acd0"/>
<circle cx="99.4" cy="105.4" r="9.2" fill="none" stroke="#d8a4bc" stroke-width="1.35" stroke-dasharray="3.4 2.4"/>
<circle cx="77.3" cy="116.6" r="5.5" fill="#ee8a48"/>
<circle cx="312.3" cy="123.5" r="11.6" fill="none" stroke="#dc7660" stroke-width="1.35" stroke-dasharray="3.4 2.4"/>
<circle cx="306" cy="135.9" r="8.7" fill="#dc6446"/>
<ellipse cx="327" cy="147.7" rx="4.1" ry="4.8" fill="#f2acd0"/>
<circle cx="-5.4" cy="234" r="21.3" fill="none" stroke="#dc7660" stroke-width="1.35" stroke-dasharray="3.4 2.6"/>
<circle cx="16.8" cy="225" r="12.7" fill="#ee8a48"/>
<circle cx="25.2" cy="250.7" r="4.1" fill="#dc6446"/></g><g id="to"><g transform="translate(1,166)">
<ellipse cx="115.5" cy="-9.5" rx="11" ry="5.2" transform="rotate(57 115.5 -9.5)" fill="#23a04f" stroke="#3a1d14" stroke-width="3"/>
<path d="M124.0,0.0 C115.6,0.5 103.2,2.9 95.5,5.7 C87.8,8.5 82.5,11.8 78.0,17.0 C73.5,22.2 71.3,28.8 68.6,37.0 C65.9,45.2 64.4,57.0 62.0,66.0 C59.6,75.0 59.0,81.5 54.0,91.0 C49.0,100.5 39.1,113.0 32.0,123.0 C24.9,133.0 16.4,141.8 11.6,151.0 C6.8,160.2 4.8,169.5 3.0,178.0 C1.2,186.5 0.3,193.3 1.0,202.0 C1.7,210.7 3.0,220.6 7.0,230.0 C11.1,239.4 16.2,250.1 25.3,258.2 C34.4,266.2 48.4,272.9 61.5,278.3 C74.6,283.7 90.7,287.6 103.8,290.4 C116.9,293.1 127.3,294.8 140.0,294.8 C152.7,294.8 167.2,292.6 180.0,290.5 C192.8,288.4 205.5,286.4 216.7,282.3 C227.8,278.2 238.5,274.9 246.9,266.2 C255.3,257.5 263.0,241.1 267.0,230.0 C271.0,218.9 271.0,207.8 271.0,199.7 C271.0,191.6 270.4,190.3 267.0,181.6 C263.6,172.9 258.3,158.1 250.9,147.3 C243.5,136.6 232.2,126.5 222.7,117.1 C213.1,107.7 200.5,100.0 193.6,91.0 C186.7,82.0 184.4,72.5 181.0,63.0 C177.6,53.5 176.2,42.5 173.0,34.0 C169.8,25.5 166.5,17.2 162.0,12.0 C157.5,6.8 152.3,4.5 146.0,2.5 C139.7,0.5 132.4,-0.5 124.0,0.0Z" fill="#e60012" stroke="#3a1d14" stroke-width="4" stroke-linejoin="round"/>
<ellipse cx="82" cy="40" rx="5.2" ry="8.3" transform="rotate(12 82 40)" fill="#fff" stroke="#3a1d14" stroke-width="3.8"/>
<ellipse cx="159.5" cy="38.5" rx="5.2" ry="8.3" transform="rotate(-12 159.5 38.5)" fill="#fff" stroke="#3a1d14" stroke-width="3.8"/>
<path d="M106,49.5 Q121,35 137,48.5 Q121,63 106,49.5Z" fill="#ffe100" stroke="#3a1d14" stroke-width="3.8" stroke-linejoin="round"/>
<path d="M84,23 Q88,20.5 92,20.5" fill="none" stroke="#3a1d14" stroke-width="2.6" stroke-linecap="round"/>
<path d="M152,19 Q157,16 162,19" fill="none" stroke="#3a1d14" stroke-width="2.6" stroke-linecap="round"/>
</g>
<g fill="none" stroke="#006a35" stroke-width="3.6" stroke-linecap="round">
<path d="M185.6,121.0 C184.9,118.3 181.5,109.8 181.3,104.8 C181.1,99.8 182.6,95.2 184.4,91.0 C186.2,86.8 189.8,84.0 191.9,79.8 C194.0,75.6 196.3,70.8 196.9,66.0 C197.5,61.2 196.8,56.4 195.6,51.0 C194.3,45.6 190.4,36.6 189.4,33.7"/>
<path d="M195.6,61.0 C193.1,60.2 185.1,58.7 180.7,56.0 C176.3,53.3 174.4,47.6 169.4,45.0 C164.4,42.4 153.8,41.3 150.7,40.6"/>
<path d="M169.4,45 L161.3,31"/><path d="M169.4,45 Q174,36 176,26"/>
<path d="M184.4,93.6 C188.2,92.5 199.8,88.6 206.9,87.3 C214.0,86.0 223.5,85.8 226.8,85.5"/>
<path d="M208,71 L210.6,84"/><path d="M216.8,75 L211.5,84"/>
</g>
<g fill="#006a35"><circle cx="150.7" cy="40.6" r="4.6"/><circle cx="160.7" cy="30" r="4.6"/><circle cx="176.3" cy="25" r="4.9"/></g>
<g fill="#d00d28">
<ellipse cx="180.7" cy="42.4" rx="4.2" ry="4.8"/>
<ellipse cx="205.6" cy="41" rx="4.2" ry="4.8"/>
<ellipse cx="173.2" cy="83" rx="4.2" ry="4.8"/>
<ellipse cx="199.4" cy="80.5" rx="4.2" ry="4.8"/>
<ellipse cx="224.3" cy="69.6" rx="4.2" ry="4.8"/>
</g><g fill="#ee88b6">
<circle cx="198" cy="26.8" r="4.4"/>
<circle cx="159.5" cy="53.7" r="5.4"/>
<circle cx="211.8" cy="62.4" r="5.4"/>
<circle cx="183" cy="71.7" r="4.4"/>
<circle cx="235" cy="84.8" r="4.9"/>
<circle cx="215" cy="95.4" r="4.6"/>
</g>
<g fill="#006a38">
<path d="M314.5,238 Q310,262 312,282 Q314,302 318,322" fill="none" stroke="#006a38" stroke-width="3" stroke-linecap="round"/>
<ellipse cx="315" cy="229.5" rx="3.3" ry="9.5" transform="rotate(4 315 229.5)"/>
<ellipse cx="309.5" cy="244.0" rx="7.3" ry="4.9" transform="rotate(30 309.5 244.0)"/>
<ellipse cx="320.0" cy="242.0" rx="7.3" ry="4.9" transform="rotate(-30 320.0 242.0)"/>
<ellipse cx="306.0" cy="258.5" rx="7.3" ry="4.9" transform="rotate(22 306.0 258.5)"/>
<ellipse cx="320.0" cy="260.0" rx="7.3" ry="4.9" transform="rotate(-22 320.0 260.0)"/>
<ellipse cx="305.0" cy="276.5" rx="7.3" ry="4.9" transform="rotate(15 305.0 276.5)"/>
<ellipse cx="320.0" cy="276.5" rx="7.3" ry="4.9" transform="rotate(-15 320.0 276.5)"/>
<ellipse cx="306.0" cy="294.0" rx="7.3" ry="4.9" transform="rotate(18 306.0 294.0)"/>
<ellipse cx="321.0" cy="292.6" rx="7.3" ry="4.9" transform="rotate(-18 321.0 292.6)"/>
<ellipse cx="309.6" cy="312.0" rx="7.3" ry="4.9" transform="rotate(22 309.6 312.0)"/>
<ellipse cx="323.0" cy="307.0" rx="7.3" ry="4.9" transform="rotate(-22 323.0 307.0)"/>
</g>
<circle cx="85.9" cy="93.6" r="13.8" fill="#ee86b6"/>
<circle cx="99.4" cy="105.4" r="9.2" fill="none" stroke="#d08aa8" stroke-width="1.35" stroke-dasharray="3.4 2.4"/>
<circle cx="77.3" cy="116.6" r="5.5" fill="#e8561a"/>
<circle cx="312.3" cy="123.5" r="11.6" fill="none" stroke="#cc4848" stroke-width="1.35" stroke-dasharray="3.4 2.4"/>
<circle cx="306" cy="135.9" r="8.7" fill="#d00d28"/>
<ellipse cx="327" cy="147.7" rx="4.1" ry="4.8" fill="#ee88b6"/>
<circle cx="-5.4" cy="234" r="21.3" fill="none" stroke="#cc4848" stroke-width="1.35" stroke-dasharray="3.4 2.6"/>
<circle cx="16.8" cy="225" r="12.7" fill="#e85a18"/>
<circle cx="25.2" cy="250.7" r="4.1" fill="#d00d28"/></g></defs>
<rect x="74" y="112" width="1554" height="911" fill="#4b4b4b"/>
<rect x="204" y="100" width="1296" height="841" fill="#fff"/>
<use href="#tc" x="-52" y="-984"/>
<use href="#tc" x="-52" y="-525"/>
<use href="#tc" x="-52" y="-66"/>
<use href="#tc" x="-52" y="393"/>
<use href="#tc" x="-52" y="852"/>
<use href="#tc" x="313" y="-831"/>
<use href="#tc" x="313" y="-372"/>
<use href="#tc" x="313" y="87"/>
<use href="#tc" x="313" y="546"/>
<use href="#tc" x="313" y="1005"/>
<use href="#tc" x="678" y="-678"/>
<use href="#tc" x="678" y="-219"/>
<use href="#tc" x="678" y="699"/>
<use href="#tc" x="678" y="1158"/>
<use href="#tc" x="1043" y="-525"/>
<use href="#tc" x="1043" y="-66"/>
<use href="#tc" x="1043" y="393"/>
<use href="#tc" x="1043" y="852"/>
<use href="#tc" x="1043" y="1311"/>
<use href="#tc" x="1408" y="-372"/>
<use href="#tc" x="1408" y="87"/>
<use href="#tc" x="1408" y="546"/>
<use href="#tc" x="1408" y="1005"/>
<use href="#tc" x="1408" y="1464"/>
<use href="#to" x="678" y="240"/>
<rect x="678.5" y="240.5" width="365" height="459" fill="none" stroke="#16167e" stroke-width="1.2"/>
<path d="M203.5,100 L203.5,941.5 L1500.5,941.5 L1500.5,100" fill="none" stroke="#000" stroke-width="1"/>
</svg>
<div class="a" style="left:369px;top:342px;width:252px;height:436px;background:#353535;border:1px solid #1a1a1a;z-index:3">
</div>
<div class="a" style="z-index:4;left:0;top:0">
<div class="a" style="left:370px;top:342px;width:250px;height:13px;background:#1f1f1f"></div>
<svg class="a" style="left:592px;top:345px" width="9" height="7"><path d="M4,0 L0.5,3.5 L4,7Z M8.5,0 L5,3.5 L8.5,7Z" fill="#cfcfcf"/></svg>
<svg class="a" style="left:608px;top:344px" width="8" height="8"><path d="M1,1 L7,7 M7,1 L1,7" stroke="#dcdcdc" stroke-width="1.5"/></svg>
<div class="a" style="left:370px;top:355px;width:250px;height:18px;background:#262626"></div>
<div class="a" style="left:370px;top:355px;width:62px;height:18px;background:#353535"></div>
<div class="t" style="left:378px;top:358px;font-size:12px;color:#d6d6d6">圖樣選項</div>
<svg class="a" style="left:602px;top:360px" width="14" height="9"><path d="M0,2 L4,2 L2,4.5Z" fill="#cfcfcf"/><rect x="5" y="0" width="8" height="1.3" fill="#cfcfcf"/><rect x="5" y="3" width="8" height="1.3" fill="#cfcfcf"/><rect x="5" y="6" width="8" height="1.3" fill="#cfcfcf"/></svg>
<div class="a" style="left:376px;top:380px;width:27px;height:24px;background:#303030;border:1px solid #242424"></div>
<svg class="a" style="left:380px;top:383px" width="20" height="17"><rect x="1" y="1" width="6" height="6" fill="none" stroke="#ccc"/><rect x="3" y="3" width="2" height="2" fill="#ccc"/><rect x="13" y="1" width="6" height="6" fill="none" stroke="#ccc"/><rect x="15" y="3" width="2" height="2" fill="#ccc"/><path d="M4,12 L16,12 M4,12 L6.5,10 M4,12 L6.5,14 M16,12 L13.5,10 M16,12 L13.5,14" fill="none" stroke="#ccc" stroke-width="1"/></svg>
<div class="a" style="left:375px;top:410px;width:238px;height:1px;background:#2a2a2a"></div>
<div class="t" style="left:400px;top:421px;font-size:12px;color:#dcdcdc">名稱：</div>
<div class="a" style="left:435px;top:419px;width:178px;height:17px;background:#bdbdbd;border:1px solid #2a2a2a"></div>
<div class="t" style="left:440px;top:421px;font-size:12px;color:#111">新增圖樣</div>
<div class="t" style="left:375px;top:447px;font-size:12px;color:#dcdcdc">拼貼類型：</div>
<div class="a" style="left:435px;top:444px;width:122px;height:19px;background:#333;border:1px solid #242424"></div>
<svg class="a" style="left:444px;top:447px" width="11" height="12"><rect x="1" y="1" width="9" height="10" fill="none" stroke="#bbb" stroke-width="0.9"/><path d="M5.5,1 L5.5,11 M1,6 L10,6" stroke="#bbb" stroke-width="0.9"/></svg>
<div class="t" style="left:463px;top:447px;font-size:12px;color:#dcdcdc">磚紋依直欄</div>
<div class="a" style="left:538px;top:447px;width:1px;height:13px;background:#4a4a4a"></div>
<svg class="a" style="left:544px;top:451px" width="9" height="6"><path d="M0,0 L8,0 L4,5Z" fill="#d0d0d0"/></svg>
<svg class="a" style="left:564px;top:444px" width="50" height="50"><rect width="50" height="50" fill="#fff"/><use href="#to" transform="translate(-16.90,-62.70) scale(0.04575)"/><use href="#to" transform="translate(-16.90,-41.70) scale(0.04575)"/><use href="#to" transform="translate(-16.90,-20.70) scale(0.04575)"/><use href="#to" transform="translate(-16.90,0.30) scale(0.04575)"/><use href="#to" transform="translate(-16.90,21.30) scale(0.04575)"/><use href="#to" transform="translate(-16.90,42.30) scale(0.04575)"/><use href="#to" transform="translate(-0.20,-55.70) scale(0.04575)"/><use href="#to" transform="translate(-0.20,-34.70) scale(0.04575)"/><use href="#to" transform="translate(-0.20,-13.70) scale(0.04575)"/><use href="#to" transform="translate(-0.20,7.30) scale(0.04575)"/><use href="#to" transform="translate(-0.20,28.30) scale(0.04575)"/><use href="#to" transform="translate(-0.20,49.30) scale(0.04575)"/><use href="#to" transform="translate(16.50,-48.70) scale(0.04575)"/><use href="#to" transform="translate(16.50,-27.70) scale(0.04575)"/><use href="#to" transform="translate(16.50,-6.70) scale(0.04575)"/><use href="#to" transform="translate(16.50,14.30) scale(0.04575)"/><use href="#to" transform="translate(16.50,35.30) scale(0.04575)"/><use href="#to" transform="translate(16.50,56.30) scale(0.04575)"/><use href="#to" transform="translate(33.20,-41.70) scale(0.04575)"/><use href="#to" transform="translate(33.20,-20.70) scale(0.04575)"/><use href="#to" transform="translate(33.20,0.30) scale(0.04575)"/><use href="#to" transform="translate(33.20,21.30) scale(0.04575)"/><use href="#to" transform="translate(33.20,42.30) scale(0.04575)"/><use href="#to" transform="translate(33.20,63.30) scale(0.04575)"/><use href="#to" transform="translate(49.90,-34.70) scale(0.04575)"/><use href="#to" transform="translate(49.90,-13.70) scale(0.04575)"/><use href="#to" transform="translate(49.90,7.30) scale(0.04575)"/><use href="#to" transform="translate(49.90,28.30) scale(0.04575)"/><use href="#to" transform="translate(49.90,49.30) scale(0.04575)"/><use href="#to" transform="translate(49.90,70.30) scale(0.04575)"/></svg>
<div class="t" style="left:375px;top:474px;font-size:12px;color:#dcdcdc">磚紋位移：</div>
<div class="a" style="left:435px;top:470px;width:62px;height:19px;background:#333;border:1px solid #242424"></div>
<div class="t" style="left:442px;top:474px;font-size:12px;color:#dcdcdc">1/3</div>
<div class="a" style="left:478px;top:473px;width:1px;height:13px;background:#4a4a4a"></div>
<svg class="a" style="left:484px;top:477px" width="9" height="6"><path d="M0,0 L8,0 L4,5Z" fill="#d0d0d0"/></svg>
<div class="a" style="left:375px;top:500px;width:238px;height:1px;background:#2a2a2a"></div>
<div class="t" style="left:400px;top:512px;font-size:12px;color:#dcdcdc">寬度：</div>
<div class="a" style="left:435px;top:509px;width:89px;height:17px;background:#bdbdbd;border:1px solid #2a2a2a"></div>
<div class="t" style="left:439px;top:511px;font-size:12px;color:#111">83.713 mm</div>
<div class="t" style="left:400px;top:538px;font-size:12px;color:#dcdcdc">高度：</div>
<div class="a" style="left:435px;top:535px;width:89px;height:17px;background:#bdbdbd;border:1px solid #2a2a2a"></div>
<div class="t" style="left:439px;top:537px;font-size:12px;color:#111">105.1284 mm</div>
<div class="a" style="left:532px;top:518px;width:24px;height:23px;background:#2a2a2a;border:1px solid #242424"></div>
<svg class="a" style="left:538px;top:521px" width="12" height="17"><rect x="3" y="2" width="6" height="13" rx="3" fill="none" stroke="#d8d8d8" stroke-width="1.5"/><path d="M6,6 L6,11" stroke="#d8d8d8" stroke-width="1.3"/></svg>
<div class="a" style="left:435px;top:560px;width:12px;height:12px;background:#2c2c2c;border:1px solid #202020"></div>
<div class="t" style="left:451px;top:561px;font-size:12px;color:#dcdcdc">將拼貼調整為作品大小</div>
<div class="a" style="left:435px;top:580px;width:12px;height:12px;background:#2c2c2c;border:1px solid #202020"></div><svg class="a" style="left:436px;top:578px" width="13" height="13"><path d="M2,6.5 L5,10 L11.5,1.5" fill="none" stroke="#e6e6e6" stroke-width="1.8"/></svg>
<div class="t" style="left:451px;top:581px;font-size:12px;color:#dcdcdc">將拼貼與作品一起移動</div>
<div class="t" style="left:376px;top:604px;font-size:12px;color:#8a8a8a">水平間距：</div>
<div class="a" style="left:435px;top:601px;width:89px;height:17px;background:#5e5e5e;border:1px solid #2a2a2a"></div>
<div class="t" style="left:439px;top:604px;font-size:12px;color:#333">0 mm</div>
<div class="t" style="left:376px;top:630px;font-size:12px;color:#8a8a8a">垂直間距：</div>
<div class="a" style="left:435px;top:627px;width:89px;height:17px;background:#5e5e5e;border:1px solid #2a2a2a"></div>
<div class="t" style="left:439px;top:630px;font-size:12px;color:#333">0 mm</div>
<div class="a" style="left:532px;top:610px;width:24px;height:24px;background:#333;border:1px solid #2a2a2a"></div>
<svg class="a" style="left:538px;top:614px" width="12" height="17"><rect x="3" y="2" width="6" height="13" rx="3" fill="none" stroke="#666" stroke-width="1.5"/><path d="M6,6 L6,11" stroke="#666" stroke-width="1.3"/></svg>
<div class="t" style="left:400px;top:656px;font-size:12px;color:#dcdcdc;font-weight:bold">重疊：</div>
<div class="a" style="left:435px;top:653px;width:24px;height:19px;background:#252525;border:1px solid #242424"></div>
<div class="a" style="left:459px;top:653px;width:23px;height:19px;background:#404040;border:1px solid #242424"></div>
<div class="a" style="left:489px;top:653px;width:24px;height:19px;background:#252525;border:1px solid #242424"></div>
<div class="a" style="left:513px;top:653px;width:23px;height:19px;background:#404040;border:1px solid #242424"></div>
<svg class="a" style="left:437px;top:655px" width="100" height="16"><path d="M4,8 L8,4 L12,8 L8,12Z" fill="#ddd"/><path d="M9,8 L12.5,4.5 L16,8 L12.5,11.5Z" fill="#999"/><path d="M28,8 L31.5,4.5 L35,8 L31.5,11.5Z" fill="#999"/><path d="M32,8 L36,4 L40,8 L36,12Z" fill="#ddd"/><path d="M63,6 L67,2 L71,6 L67,10Z" fill="#ddd"/><path d="M63,10 L67,6.5 L71,10 L67,14Z" fill="#999"/><path d="M87,6 L91,2.5 L95,6 L91,9.5Z" fill="#999"/><path d="M87,10 L91,6 L95,10 L91,14Z" fill="#ddd"/></svg>
<div class="a" style="left:375px;top:679px;width:238px;height:1px;background:#2a2a2a"></div>
<div class="t" style="left:400px;top:689px;font-size:12px;color:#dcdcdc">拷貝：</div>
<div class="a" style="left:435px;top:686px;width:64px;height:19px;background:#333;border:1px solid #242424"></div>
<div class="t" style="left:441px;top:689px;font-size:12px;color:#dcdcdc">5 x 5</div>
<div class="a" style="left:481px;top:689px;width:1px;height:13px;background:#4a4a4a"></div>
<svg class="a" style="left:486px;top:693px" width="9" height="6"><path d="M0,0 L8,0 L4,5Z" fill="#d0d0d0"/></svg>
<div class="a" style="left:435px;top:715px;width:12px;height:12px;background:#2c2c2c;border:1px solid #202020"></div><svg class="a" style="left:436px;top:713px" width="13" height="13"><path d="M2,6.5 L5,10 L11.5,1.5" fill="none" stroke="#e6e6e6" stroke-width="1.8"/></svg>
<div class="t" style="left:451px;top:716px;font-size:12px;color:#dcdcdc">模糊拷貝 到：</div>
<div class="a" style="left:527px;top:712px;width:47px;height:18px;background:#bdbdbd;border:1px solid #2a2a2a"></div>
<div class="t" style="left:530px;top:715px;font-size:12px;color:#111">70%</div>
<div class="a" style="left:573px;top:712px;width:15px;height:18px;background:#3a3a3a;border:1px solid #242424"></div><svg class="a" style="left:576px;top:718px" width="9" height="6"><path d="M0,0 L8,0 L4,5Z" fill="#d0d0d0"/></svg>
<div class="a" style="left:435px;top:738px;width:12px;height:12px;background:#2c2c2c;border:1px solid #202020"></div><svg class="a" style="left:436px;top:736px" width="13" height="13"><path d="M2,6.5 L5,10 L11.5,1.5" fill="none" stroke="#e6e6e6" stroke-width="1.8"/></svg>
<div class="t" style="left:451px;top:739px;font-size:12px;color:#dcdcdc">顯示拼貼邊緣</div>
<div class="a" style="left:435px;top:758px;width:12px;height:12px;background:#2c2c2c;border:1px solid #202020"></div>
<div class="t" style="left:451px;top:759px;font-size:12px;color:#dcdcdc">顯示色票邊界</div>
</div>
<!-- STATUS BAR -->
<div class="a" style="left:74px;top:1023px;width:1554px;height:1px;background:#141414"></div>
<div class="a" style="left:74px;top:1024px;width:1570px;height:16px;background:#202020"></div>
<div class="a" style="left:79px;top:1025px;width:51px;height:14px;background:#c6c6c6;border:1px solid #2a2a2a"></div>
<div class="t" style="left:81px;top:1028px;font-size:10.5px;color:#111">154%</div>
<div class="a" style="left:130px;top:1025px;width:15px;height:14px;background:#3a3a3a;border:1px solid #242424"></div>
<svg class="a" style="left:134px;top:1030px" width="8" height="6"><path d="M0,0 L7,0 L3.5,4.5Z" fill="#d8d8d8"/></svg>
<svg class="a" style="left:152px;top:1026px" width="30" height="11"><path d="M1,1 L1,10" stroke="#5a5a5a" stroke-width="1.5"/><path d="M9,1 L3,5.5 L9,10Z" fill="#5a5a5a"/><path d="M26,1 L20,5.5 L26,10Z" fill="#5a5a5a"/></svg>
<div class="a" style="left:189px;top:1025px;width:41px;height:14px;background:#c6c6c6;border:1px solid #2a2a2a"></div>
<div class="t" style="left:192px;top:1028px;font-size:10.5px;color:#111">1</div>
<div class="a" style="left:230px;top:1025px;width:15px;height:14px;background:#3a3a3a;border:1px solid #242424"></div>
<svg class="a" style="left:234px;top:1030px" width="8" height="6"><path d="M0,0 L7,0 L3.5,4.5Z" fill="#d8d8d8"/></svg>
<svg class="a" style="left:254px;top:1026px" width="30" height="11"><path d="M1,1 L7,5.5 L1,10Z" fill="#5a5a5a"/><path d="M17,1 L23,5.5 L17,10Z" fill="#5a5a5a"/><path d="M25,1 L25,10" stroke="#5a5a5a" stroke-width="1.5"/></svg>
<div class="a" style="left:288px;top:1025px;width:1px;height:14px;background:#3a3a3a"></div>
<div class="t" style="left:378px;top:1028px;font-size:10.5px;color:#cfcfcf">選取</div>
<div class="a" style="left:488px;top:1025px;width:1px;height:14px;background:#3a3a3a"></div>
<svg class="a" style="left:493px;top:1027px" width="7" height="10"><path d="M0,0 L6,4.5 L0,9Z" fill="#d8d8d8"/></svg>
<svg class="a" style="left:511px;top:1027px" width="7" height="10"><path d="M6,0 L0,4.5 L6,9Z" fill="#d8d8d8"/></svg>
<div class="a" style="left:1059px;top:1024px;width:15px;height:15px;background:#8c8c8c"></div>
<svg class="a" style="left:1615px;top:1027px" width="7" height="10"><path d="M0,0 L6,4.5 L0,9Z" fill="#e0e0e0"/></svg>
<div class="a" style="left:1628px;top:1023px;width:16px;height:16px;background:#2c2c2c"></div>
<div class="a" style="left:0;top:1039px;width:1646px;height:1px;background:#1a1a1a"></div>
<!-- RIGHT SCROLL -->
<div class="a" style="left:1628px;top:85px;width:16px;height:938px;background:#202020"></div>
<div class="a" style="left:1628px;top:65px;width:16px;height:1px;background:#333"></div>
<svg class="a" style="left:1630px;top:90px" width="12" height="8"><path d="M0.5,7 L11,7 L5.75,1Z" fill="#e0e0e0"/></svg>
<div class="a" style="left:1629px;top:549px;width:15px;height:15px;background:#8c8c8c"></div>
<svg class="a" style="left:1630px;top:1010px" width="12" height="8"><path d="M0.5,1 L11,1 L5.75,7Z" fill="#e0e0e0"/></svg>
<div class="a" style="left:1644px;top:64px;width:3px;height:978px;background:#181818"></div>
<!-- RIGHT PANEL -->
<div class="a" style="left:1647px;top:65px;width:273px;height:12px;background:#1f1f1f"></div>
<div class="a" style="left:1647px;top:65px;width:273px;height:1px;background:#353535"></div>
<svg class="a" style="left:1909px;top:67px" width="10" height="8"><path d="M1,0 L5,3.5 L1,7Z M5,0 L9,3.5 L5,7Z" fill="#cfcfcf"/></svg>
<div class="a" style="left:1647px;top:77px;width:273px;height:965px;background:#353535"></div>
<div class="a" style="left:1647px;top:77px;width:273px;height:18px;background:#222222"></div>
<div class="a" style="left:1647px;top:77px;width:273px;height:1px;background:#2c2c2c"></div>
<div class="a" style="left:1679px;top:77px;width:1px;height:18px;background:#1b1b1b"></div>
<div class="t" style="left:1655px;top:80px;font-size:12px;color:#929292">色彩</div>
<div class="a" style="left:1710px;top:77px;width:1px;height:18px;background:#1b1b1b"></div>
<div class="t" style="left:1687px;top:80px;font-size:12px;color:#929292">漸層</div>
<div class="a" style="left:1741px;top:77px;width:1px;height:18px;background:#1b1b1b"></div>
<div class="t" style="left:1717px;top:80px;font-size:12px;color:#929292">顏色</div>
<div class="a" style="left:1772px;top:77px;width:1px;height:18px;background:#1b1b1b"></div>
<div class="t" style="left:1749px;top:80px;font-size:12px;color:#929292">變形</div>
<div class="a" style="left:1803px;top:77px;width:1px;height:18px;background:#1b1b1b"></div>
<div class="t" style="left:1780px;top:80px;font-size:12px;color:#929292">對齊</div>
<div class="a" style="left:1803px;top:77px;width:74px;height:18px;background:#353535"></div>
<div class="t" style="left:1811px;top:80px;font-size:12px;color:#dedede">路徑管理員</div>
<svg class="a" style="left:1900px;top:83px" width="14" height="9"><path d="M0,2 L4,2 L2,4.5Z" fill="#cfcfcf"/><rect x="5" y="0" width="8" height="1.3" fill="#cfcfcf"/><rect x="5" y="3" width="8" height="1.3" fill="#cfcfcf"/><rect x="5" y="6" width="8" height="1.3" fill="#cfcfcf"/></svg>
<div class="t" style="left:1652px;top:104px;font-size:12px;color:#dcdcdc">形狀模式：</div>
<svg class="a" style="left:1657px;top:126px" width="16" height="16"><rect x="1.5" y="1.5" width="9" height="9" fill="#8a8a8a" stroke="#c8c8c8"/><rect x="5.5" y="5.5" width="9" height="9" fill="#8a8a8a" stroke="#c8c8c8"/><rect x="6" y="6" width="4" height="4" fill="#8a8a8a"/></svg>
<svg class="a" style="left:1692px;top:126px" width="16" height="16"><rect x="5.5" y="5.5" width="9" height="9" fill="none" stroke="#5a5a5a"/><rect x="1.5" y="1.5" width="9" height="9" fill="#6a6a6a" stroke="#c8c8c8"/></svg>
<svg class="a" style="left:1728px;top:126px" width="16" height="16"><rect x="1.5" y="1.5" width="9" height="9" fill="none" stroke="#c8c8c8"/><rect x="5.5" y="5.5" width="9" height="9" fill="none" stroke="#c8c8c8"/><rect x="6" y="6" width="4" height="4" fill="#8a8a8a"/></svg>
<svg class="a" style="left:1764px;top:126px" width="16" height="16"><rect x="1.5" y="1.5" width="9" height="9" fill="#8a8a8a" stroke="#c8c8c8"/><rect x="5.5" y="5.5" width="9" height="9" fill="#8a8a8a" stroke="#c8c8c8"/><rect x="6" y="6" width="4" height="4" fill="#2a2a2a"/></svg>
<div class="a" style="left:1796px;top:124px;width:75px;height:19px;background:#333333;border:1px solid #242424"></div>
<div class="t" style="left:1822px;top:128px;font-size:12px;color:#858585">展開</div>
<div class="t" style="left:1652px;top:154px;font-size:12px;color:#dcdcdc">路徑管理員：</div>
<svg class="a" style="left:1660px;top:178px" width="16" height="16"><path d="M1.5,9 L1.5,1.5 L9,1.5 M3.5,11 L3.5,3.5 L11,3.5" fill="none" stroke="#c8c8c8"/><rect x="5.5" y="5.5" width="4" height="4" fill="#888" stroke="#c8c8c8" stroke-width="0.8"/><path d="M7,14.5 L14.5,14.5 L14.5,7 M5,12.5 L12.5,12.5 L12.5,5" fill="none" stroke="#c8c8c8"/></svg>
<svg class="a" style="left:1698px;top:178px" width="16" height="16"><rect x="1" y="1" width="4" height="4" fill="#ddd"/><rect x="1" y="6" width="8" height="3" fill="#ccc"/><rect x="6" y="1" width="3" height="3" fill="#999"/><rect x="8" y="8" width="7" height="7" fill="#bbb"/><rect x="4" y="11" width="4" height="4" fill="#aaa"/></svg>
<svg class="a" style="left:1735px;top:178px" width="16" height="16"><rect x="1" y="1" width="9" height="9" fill="#d8d8d8"/><rect x="6" y="6" width="9" height="9" fill="#b0b0b0"/><rect x="10" y="6" width="5" height="4" fill="#2e2e2e"/><rect x="6" y="10" width="4" height="5" fill="#cfcfcf"/></svg>
<svg class="a" style="left:1772px;top:178px" width="16" height="16"><rect x="1" y="1" width="9" height="9" fill="#4a4a4a"/><rect x="6" y="6" width="9" height="9" fill="#6a6a6a"/><rect x="6" y="6" width="4" height="4" fill="#cfcfcf"/></svg>
<svg class="a" style="left:1810px;top:178px" width="16" height="16"><path d="M1.5,1.5 L9.5,1.5 L9.5,5.5 M1.5,1.5 L1.5,9.5 L5.5,9.5 M14.5,14.5 L6.5,14.5 L6.5,10.5 M14.5,14.5 L14.5,6.5 L10.5,6.5" fill="none" stroke="#c8c8c8"/><rect x="6" y="6" width="4" height="4" fill="none" stroke="#c8c8c8"/></svg>
<svg class="a" style="left:1848px;top:178px" width="16" height="16"><rect x="1.5" y="1.5" width="9" height="9" fill="#353535" stroke="#555"/><path d="M10.5,5.5 L14.5,5.5 L14.5,14.5 L5.5,14.5 L5.5,10.5 L10.5,10.5Z" fill="#999" stroke="#c8c8c8"/></svg>
<div class="a" style="left:1647px;top:202px;width:273px;height:4px;background:#1c1c1c"></div>
<div class="a" style="left:1647px;top:206px;width:273px;height:18px;background:#222222"></div>
<div class="a" style="left:1647px;top:206px;width:273px;height:1px;background:#2c2c2c"></div>
<div class="a" style="left:1647px;top:206px;width:44px;height:18px;background:#353535"></div>
<svg class="a" style="left:1651px;top:210px" width="7" height="11"><path d="M1,4.5 L3.5,1.5 L6,4.5 M1,6.5 L3.5,9.5 L6,6.5" fill="none" stroke="#d0d0d0" stroke-width="1.1"/></svg>
<div class="t" style="left:1661px;top:209px;font-size:12px;color:#dedede">筆畫</div>
<div class="a" style="left:1735px;top:206px;width:1px;height:18px;background:#1b1b1b"></div>
<div class="t" style="left:1699px;top:209px;font-size:12px;color:#929292">透明度</div>
<svg class="a" style="left:1900px;top:212px" width="14" height="9"><path d="M0,2 L4,2 L2,4.5Z" fill="#cfcfcf"/><rect x="5" y="0" width="8" height="1.3" fill="#cfcfcf"/><rect x="5" y="3" width="8" height="1.3" fill="#cfcfcf"/><rect x="5" y="6" width="8" height="1.3" fill="#cfcfcf"/></svg>
<div class="t" style="left:1677px;top:236px;font-size:12px;color:#dcdcdc">寬度：</div>
<div class="a" style="left:1713px;top:232px;width:17px;height:19px;background:#3a3a3a;border:1px solid #242424"></div>
<svg class="a" style="left:1716px;top:235px" width="10" height="14"><path d="M1,5 L8,5 L4.5,1Z M1,8 L8,8 L4.5,12Z" fill="#d0d0d0"/></svg>
<div class="a" style="left:1730px;top:232px;width:53px;height:19px;background:#bdbdbd;border:1px solid #242424"></div>
<div class="a" style="left:1782px;top:232px;width:15px;height:19px;background:#3a3a3a;border:1px solid #242424"></div><svg class="a" style="left:1785px;top:239px" width="9" height="6"><path d="M0,0 L8,0 L4,5Z" fill="#d0d0d0"/></svg>
<div class="t" style="left:1676px;top:262px;font-size:12px;color:#8a8a8a">端點：</div>
<div class="a" style="left:1713px;top:258px;width:23px;height:19px;background:#333333;border:1px solid #262626"></div>
<div class="a" style="left:1736px;top:258px;width:23px;height:19px;background:#333333;border:1px solid #262626"></div>
<div class="a" style="left:1759px;top:258px;width:23px;height:19px;background:#333333;border:1px solid #262626"></div>
<div class="t" style="left:1676px;top:286px;font-size:12px;color:#8a8a8a">尖角：</div>
<div class="a" style="left:1713px;top:284px;width:23px;height:19px;background:#333333;border:1px solid #262626"></div>
<div class="a" style="left:1736px;top:284px;width:23px;height:19px;background:#333333;border:1px solid #262626"></div>
<div class="a" style="left:1759px;top:284px;width:23px;height:19px;background:#333333;border:1px solid #262626"></div>
<div class="t" style="left:1792px;top:286px;font-size:12px;color:#8a8a8a">限度：</div>
<div class="a" style="left:1827px;top:284px;width:36px;height:18px;background:#5e5e5e;border:1px solid #2a2a2a"></div>
<div class="t" style="left:1867px;top:287px;font-size:12px;color:#8a8a8a;font-weight:bold">x</div>
<div class="t" style="left:1652px;top:313px;font-size:12px;color:#8a8a8a">對齊筆畫：</div>
<div class="a" style="left:1713px;top:311px;width:23px;height:19px;background:#333333;border:1px solid #262626"></div>
<div class="a" style="left:1736px;top:311px;width:23px;height:19px;background:#333333;border:1px solid #262626"></div>
<div class="a" style="left:1759px;top:311px;width:23px;height:19px;background:#333333;border:1px solid #262626"></div>
<div class="a" style="left:1718px;top:262px;width:12px;height:10px;background:#555"></div>
<div class="a" style="left:1741px;top:262px;width:12px;height:10px;background:#555"></div>
<div class="a" style="left:1764px;top:262px;width:12px;height:10px;background:#555"></div>
<div class="a" style="left:1718px;top:288px;width:12px;height:10px;background:#555"></div>
<div class="a" style="left:1741px;top:288px;width:12px;height:10px;background:#555"></div>
<div class="a" style="left:1764px;top:288px;width:12px;height:10px;background:#555"></div>
<div class="a" style="left:1718px;top:315px;width:12px;height:10px;background:#555"></div>
<div class="a" style="left:1741px;top:315px;width:12px;height:10px;background:#555"></div>
<div class="a" style="left:1764px;top:315px;width:12px;height:10px;background:#555"></div>
<div class="a" style="left:1652px;top:338px;width:222px;height:1px;background:#2a2a2a"></div>
<div class="a" style="left:1653px;top:348px;width:13px;height:13px;background:#1e1e1e;border:1px solid #444"></div>
<div class="a" style="left:1656px;top:353px;width:7px;height:2px;background:#e0e0e0"></div>
<div class="t" style="left:1669px;top:349px;font-size:12px;color:#dcdcdc">虛線</div>
<div class="a" style="left:1794px;top:345px;width:39px;height:19px;background:#333;border:1px solid #262626"></div>
<div class="a" style="left:1834px;top:345px;width:39px;height:19px;background:#333;border:1px solid #262626"></div>
<svg class="a" style="left:1798px;top:349px" width="72" height="11"><path d="M2,4 L2,1 L8,1 M12,1 L20,1 M24,1 L30,1 L30,4 M2,7 L2,10 L8,10 M12,10 L20,10 M24,10 L30,10 L30,7" fill="none" stroke="#777" stroke-width="1.3"/><path d="M42,4 L42,1 L48,1 M52,1 L60,1 M64,1 L70,1 L70,4 M42,7 L42,10 L48,10 M52,10 L60,10 M64,10 L70,10 L70,7" fill="none" stroke="#777" stroke-width="1.3"/></svg>
<div class="a" style="left:1653px;top:372px;width:34px;height:18px;background:#5e5e5e;border:1px solid #2a2a2a"></div>
<div class="t" style="left:1658px;top:395px;font-size:12px;color:#8a8a8a">虛線</div>
<div class="a" style="left:1690px;top:372px;width:34px;height:18px;background:#5e5e5e;border:1px solid #2a2a2a"></div>
<div class="t" style="left:1695px;top:395px;font-size:12px;color:#8a8a8a">間隔</div>
<div class="a" style="left:1727px;top:372px;width:34px;height:18px;background:#5e5e5e;border:1px solid #2a2a2a"></div>
<div class="t" style="left:1732px;top:395px;font-size:12px;color:#8a8a8a">虛線</div>
<div class="a" style="left:1764px;top:372px;width:34px;height:18px;background:#5e5e5e;border:1px solid #2a2a2a"></div>
<div class="t" style="left:1769px;top:395px;font-size:12px;color:#8a8a8a">間隔</div>
<div class="a" style="left:1801px;top:372px;width:34px;height:18px;background:#5e5e5e;border:1px solid #2a2a2a"></div>
<div class="t" style="left:1806px;top:395px;font-size:12px;color:#8a8a8a">虛線</div>
<div class="a" style="left:1838px;top:372px;width:34px;height:18px;background:#5e5e5e;border:1px solid #2a2a2a"></div>
<div class="t" style="left:1843px;top:395px;font-size:12px;color:#8a8a8a">間隔</div>
<div class="a" style="left:1652px;top:412px;width:222px;height:1px;background:#2a2a2a"></div>
<div class="t" style="left:1676px;top:426px;font-size:12px;color:#8a8a8a">箭頭：</div>
<div class="a" style="left:1713px;top:423px;width:39px;height:18px;background:#5e5e5e;border:1px solid #2a2a2a"></div>
<div class="a" style="left:1751px;top:423px;width:15px;height:18px;background:#3a3a3a;border:1px solid #242424"></div><svg class="a" style="left:1754px;top:429px" width="9" height="6"><path d="M0,0 L8,0 L4,5Z" fill="#8a8a8a"/></svg>
<div class="a" style="left:1776px;top:423px;width:39px;height:18px;background:#5e5e5e;border:1px solid #2a2a2a"></div>
<div class="a" style="left:1814px;top:423px;width:15px;height:18px;background:#3a3a3a;border:1px solid #242424"></div><svg class="a" style="left:1817px;top:429px" width="9" height="6"><path d="M0,0 L8,0 L4,5Z" fill="#8a8a8a"/></svg>
<svg class="a" style="left:1854px;top:425px" width="16" height="12"><path d="M2,4 L13,4 M10,1 L13,4 L10,7 M14,8 L3,8 M6,5 L3,8 L6,11" fill="none" stroke="#8a8a8a" stroke-width="1.4"/></svg>
<div class="t" style="left:1676px;top:455px;font-size:12px;color:#8a8a8a">縮放：</div>
<div class="a" style="left:1713px;top:451px;width:17px;height:18px;background:#3a3a3a;border:1px solid #2a2a2a"></div>
<svg class="a" style="left:1716px;top:454px" width="10" height="13"><path d="M1,5 L8,5 L4.5,1Z M1,8 L8,8 L4.5,12Z" fill="#8a8a8a"/></svg>
<div class="a" style="left:1730px;top:451px;width:36px;height:18px;background:#5e5e5e;border:1px solid #2a2a2a"></div>
<div class="t" style="left:1732px;top:455px;font-size:11.5px;color:#2a2a2a">100%</div>
<div class="a" style="left:1776px;top:451px;width:17px;height:18px;background:#3a3a3a;border:1px solid #2a2a2a"></div>
<svg class="a" style="left:1779px;top:454px" width="10" height="13"><path d="M1,5 L8,5 L4.5,1Z M1,8 L8,8 L4.5,12Z" fill="#8a8a8a"/></svg>
<div class="a" style="left:1793px;top:451px;width:36px;height:18px;background:#5e5e5e;border:1px solid #2a2a2a"></div>
<div class="t" style="left:1795px;top:455px;font-size:11.5px;color:#2a2a2a">100%</div>
<svg class="a" style="left:1852px;top:452px" width="18" height="16"><rect x="6" y="2" width="6" height="12" rx="3" fill="none" stroke="#777" stroke-width="1.4"/><path d="M1,8 L5,8 M13,8 L17,8" stroke="#777" stroke-width="1" stroke-dasharray="1.5 1"/></svg>
<div class="t" style="left:1676px;top:484px;font-size:12px;color:#8a8a8a">對齊：</div>
<div class="a" style="left:1713px;top:481px;width:23px;height:19px;background:#333;border:1px solid #262626"></div>
<div class="a" style="left:1736px;top:481px;width:23px;height:19px;background:#333;border:1px solid #262626"></div>
<svg class="a" style="left:1716px;top:485px" width="40" height="11"><path d="M3,2 L10,2 M3,6 L15,6 M12,3 L15,6 L12,9" fill="none" stroke="#777" stroke-width="1.3"/><path d="M26,2 L36,2 M26,6 L38,6 M35,3 L38,6 L35,9" fill="none" stroke="#777" stroke-width="1.3"/></svg>
<div class="a" style="left:1652px;top:506px;width:222px;height:1px;background:#2a2a2a"></div>
<div class="t" style="left:1664px;top:519px;font-size:12px;color:#8a8a8a">描述檔：</div>
<div class="a" style="left:1713px;top:515px;width:90px;height:18px;background:#5e5e5e;border:1px solid #2a2a2a"></div>
<div class="a" style="left:1802px;top:515px;width:15px;height:18px;background:#3a3a3a;border:1px solid #242424"></div><svg class="a" style="left:1805px;top:521px" width="9" height="6"><path d="M0,0 L8,0 L4,5Z" fill="#8a8a8a"/></svg>
<svg class="a" style="left:1829px;top:517px" width="40" height="14"><path d="M1,2 L7,7 L1,12Z M15,2 L9,7 L15,12Z" fill="none" stroke="#777" stroke-width="1"/><path d="M8,1 L8,13" stroke="#777" stroke-dasharray="1 1"/><path d="M26,1 L38,1 L32,6Z M26,13 L38,13 L32,8Z" fill="none" stroke="#777" stroke-width="1"/><path d="M25,7 L39,7" stroke="#777" stroke-dasharray="1 1"/></svg>
<div class="a" style="left:1647px;top:541px;width:273px;height:4px;background:#1c1c1c"></div>
<div class="a" style="left:1647px;top:545px;width:273px;height:18px;background:#222222"></div>
<div class="a" style="left:1647px;top:545px;width:273px;height:1px;background:#2c2c2c"></div>
<div class="a" style="left:1647px;top:545px;width:44px;height:18px;background:#353535"></div>
<svg class="a" style="left:1651px;top:549px" width="7" height="11"><path d="M1,4.5 L3.5,1.5 L6,4.5 M1,6.5 L3.5,9.5 L6,6.5" fill="none" stroke="#d0d0d0" stroke-width="1.1"/></svg>
<div class="t" style="left:1661px;top:548px;font-size:12px;color:#dedede">顏色</div>
<div class="a" style="left:1731px;top:545px;width:1px;height:18px;background:#1b1b1b"></div>
<div class="t" style="left:1699px;top:548px;font-size:12px;color:#929292">色票</div>
<div class="a" style="left:1770px;top:545px;width:1px;height:18px;background:#1b1b1b"></div>
<div class="t" style="left:1738px;top:548px;font-size:12px;color:#929292">筆刷</div>
<svg class="a" style="left:1900px;top:551px" width="14" height="9"><path d="M0,2 L4,2 L2,4.5Z" fill="#cfcfcf"/><rect x="5" y="0" width="8" height="1.3" fill="#cfcfcf"/><rect x="5" y="3" width="8" height="1.3" fill="#cfcfcf"/><rect x="5" y="6" width="8" height="1.3" fill="#cfcfcf"/></svg>
<svg class="a" style="left:1651px;top:569px" width="14" height="14"><rect x="1" y="1" width="8" height="8" fill="#ddd" stroke="#222" stroke-width="1"/><rect x="4.5" y="4.5" width="8" height="8" fill="none" stroke="#ccc" stroke-width="1"/></svg>
<svg class="a" style="left:1670px;top:568px" width="12" height="12"><path d="M2,3 L9,3 L9,10 M2,3 L4,1 M2,3 L4,5 M9,10 L7,8 M9,10 L11,8" fill="none" stroke="#ccc" stroke-width="1.1"/></svg>
<div class="a" style="left:1652px;top:587px;width:20px;height:20px;background:#fff;border:1px solid #222"></div>
<svg class="a" style="left:1661px;top:597px" width="21" height="20"><rect x="0.5" y="0.5" width="20" height="19" fill="#fff" stroke="#222"/><rect x="5.5" y="5" width="10" height="10" fill="#2a2a2a"/><path d="M1,19 L20,1" stroke="#d41414" stroke-width="1.8"/></svg>
<div class="t" style="left:1698px;top:576px;font-size:12px;color:#cfcfcf;font-weight:bold">C</div>
<div class="a" style="left:1717px;top:577px;width:103px;height:7px;background:#262626;border:1px solid #444;border-radius:1px"></div>
<div class="a" style="left:1826px;top:572px;width:34px;height:19px;background:#bdbdbd;border:1px solid #222"></div>
<div class="t" style="left:1862px;top:576px;font-size:12px;color:#cfcfcf;font-weight:bold">%</div>
<div class="t" style="left:1698px;top:601px;font-size:12px;color:#cfcfcf;font-weight:bold">M</div>
<div class="a" style="left:1717px;top:602px;width:103px;height:7px;background:#262626;border:1px solid #444;border-radius:1px"></div>
<div class="a" style="left:1826px;top:597px;width:34px;height:19px;background:#bdbdbd;border:1px solid #222"></div>
<div class="t" style="left:1862px;top:601px;font-size:12px;color:#cfcfcf;font-weight:bold">%</div>
<div class="t" style="left:1698px;top:626px;font-size:12px;color:#cfcfcf;font-weight:bold">Y</div>
<div class="a" style="left:1717px;top:627px;width:103px;height:7px;background:#262626;border:1px solid #444;border-radius:1px"></div>
<div class="a" style="left:1826px;top:622px;width:34px;height:19px;background:#bdbdbd;border:1px solid #222"></div>
<div class="t" style="left:1862px;top:626px;font-size:12px;color:#cfcfcf;font-weight:bold">%</div>
<div class="t" style="left:1698px;top:651px;font-size:12px;color:#cfcfcf;font-weight:bold">K</div>
<div class="a" style="left:1717px;top:652px;width:103px;height:7px;background:#262626;border:1px solid #444;border-radius:1px"></div>
<div class="a" style="left:1826px;top:647px;width:34px;height:19px;background:#bdbdbd;border:1px solid #222"></div>
<div class="t" style="left:1862px;top:651px;font-size:12px;color:#cfcfcf;font-weight:bold">%</div>
<svg class="a" style="left:1657px;top:655px" width="12" height="12"><path d="M6,1 L1,6 L4,6 L4,11 L11,11 L11,9 L7,9 L7,6 L10,6Z" fill="#ccc"/></svg>
<div class="a" style="left:1677px;top:654px;width:14px;height:14px;background:#006b3a;border:1px solid #e8e8e8"></div>
<svg class="a" style="left:1652px;top:677px" width="40" height="14"><rect x="0" y="0" width="13" height="13" fill="#fff"/><path d="M0,13 L13,0" stroke="#d41414" stroke-width="1.6"/><rect x="13" y="0" width="13" height="13" fill="#0a0606"/><rect x="26" y="0" width="13" height="13" fill="#fff"/></svg>
<div class="a" style="left:1653px;top:701px;width:249px;height:23px;background:linear-gradient(90deg,#e2001a 0%,#f5e600 18%,#00a040 38%,#00a0e0 55%,#1d2088 72%,#e4007f 90%,#e60012 100%)"></div>
<div class="a" style="left:1653px;top:701px;width:249px;height:23px;background:linear-gradient(#fff 0%,rgba(255,255,255,0) 40%,rgba(0,0,0,0) 60%,#000 100%)"></div>
<div class="a" style="left:1647px;top:731px;width:273px;height:3px;background:#1c1c1c"></div>
<div class="a" style="left:1647px;top:733px;width:273px;height:18px;background:#222222"></div>
<div class="a" style="left:1647px;top:733px;width:273px;height:1px;background:#2c2c2c"></div>
<div class="a" style="left:1709px;top:733px;width:1px;height:18px;background:#1b1b1b"></div>
<div class="t" style="left:1655px;top:736px;font-size:12px;color:#929292">工作區域</div>
<div class="a" style="left:1710px;top:733px;width:37px;height:18px;background:#353535"></div>
<div class="t" style="left:1717px;top:736px;font-size:12px;color:#dedede">圖層</div>
<svg class="a" style="left:1900px;top:739px" width="14" height="9"><path d="M0,2 L4,2 L2,4.5Z" fill="#cfcfcf"/><rect x="5" y="0" width="8" height="1.3" fill="#cfcfcf"/><rect x="5" y="3" width="8" height="1.3" fill="#cfcfcf"/><rect x="5" y="6" width="8" height="1.3" fill="#cfcfcf"/></svg>
<div class="a" style="left:1652px;top:757px;width:262px;height:263px;background:#333;border:1px solid #262626"></div>
<div class="a" style="left:1653px;top:758px;width:260px;height:21px;background:#353535"></div>
<div class="a" style="left:1653px;top:779px;width:260px;height:21px;background:#4b5360"></div>
<div class="a" style="left:1673px;top:758px;width:1px;height:42px;background:#262626"></div>
<div class="a" style="left:1694px;top:758px;width:1px;height:42px;background:#262626"></div>
<div class="a" style="left:1700px;top:758px;width:1px;height:42px;background:#262626"></div>
<div class="a" style="left:1878px;top:758px;width:1px;height:42px;background:#262626"></div>
<div class="a" style="left:1653px;top:778px;width:260px;height:1px;background:#262626"></div>
<div class="a" style="left:1653px;top:800px;width:260px;height:1px;background:#262626"></div>
<svg class="a" style="left:1703px;top:765px" width="11" height="8"><path d="M0,0 L10,0 L5,7Z" fill="#d0d0d0"/></svg>
<svg class="a" style="left:1722px;top:760px" width="18" height="17"><rect x="0.5" y="0.5" width="17" height="16" fill="#fff" stroke="#111"/><rect x="2" y="1.5" width="13" height="14" fill="#f6d2c2"/><ellipse cx="3.5" cy="2.5" rx="1.4" ry="1.5" fill="#ec8a6a"/><ellipse cx="3.5" cy="5.3" rx="1.4" ry="1.5" fill="#ec8a6a"/><ellipse cx="3.5" cy="8.1" rx="1.4" ry="1.5" fill="#ec8a6a"/><ellipse cx="3.5" cy="10.9" rx="1.4" ry="1.5" fill="#ec8a6a"/><ellipse cx="3.5" cy="13.7" rx="1.4" ry="1.5" fill="#ec8a6a"/><ellipse cx="6.8" cy="3.8" rx="1.4" ry="1.5" fill="#ec8a6a"/><ellipse cx="6.8" cy="6.6" rx="1.4" ry="1.5" fill="#ec8a6a"/><ellipse cx="6.8" cy="9.4" rx="1.4" ry="1.5" fill="#ec8a6a"/><ellipse cx="6.8" cy="12.2" rx="1.4" ry="1.5" fill="#ec8a6a"/><ellipse cx="6.8" cy="15.0" rx="1.4" ry="1.5" fill="#ec8a6a"/><ellipse cx="10.1" cy="2.5" rx="1.4" ry="1.5" fill="#ec8a6a"/><ellipse cx="10.1" cy="5.3" rx="1.4" ry="1.5" fill="#ec8a6a"/><ellipse cx="10.1" cy="8.1" rx="1.4" ry="1.5" fill="#ec8a6a"/><ellipse cx="10.1" cy="10.9" rx="1.4" ry="1.5" fill="#ec8a6a"/><ellipse cx="10.1" cy="13.7" rx="1.4" ry="1.5" fill="#ec8a6a"/><ellipse cx="13.4" cy="3.8" rx="1.4" ry="1.5" fill="#ec8a6a"/><ellipse cx="13.4" cy="6.6" rx="1.4" ry="1.5" fill="#ec8a6a"/><ellipse cx="13.4" cy="9.4" rx="1.4" ry="1.5" fill="#ec8a6a"/><ellipse cx="13.4" cy="12.2" rx="1.4" ry="1.5" fill="#ec8a6a"/><ellipse cx="13.4" cy="15.0" rx="1.4" ry="1.5" fill="#ec8a6a"/><circle cx="9" cy="8.5" r="1.2" fill="#e01818"/></svg>
<div class="t" style="left:1745px;top:764px;font-size:12px;color:#dcdcdc">圖樣編輯模式</div>
<svg class="a" style="left:1654px;top:783px" width="18" height="12"><path d="M1,6 Q9,-1 17,6 Q9,13 1,6Z" fill="none" stroke="#cfcfcf" stroke-width="1.3"/><circle cx="9" cy="6" r="2.6" fill="#cfcfcf"/></svg>
<div class="a" style="left:1695px;top:780px;width:5px;height:19px;background:#e45050"></div>
<svg class="a" style="left:1725px;top:784px" width="8" height="11"><path d="M0,0 L7,5 L0,10Z" fill="#d0d0d0"/></svg>
<svg class="a" style="left:1742px;top:781px" width="18" height="17"><rect x="0.5" y="0.5" width="17" height="16" fill="#fff" stroke="#111"/><rect x="2" y="1.5" width="13" height="14" fill="#f6d2c2"/><ellipse cx="3.5" cy="2.5" rx="1.4" ry="1.5" fill="#ec8a6a"/><ellipse cx="3.5" cy="5.3" rx="1.4" ry="1.5" fill="#ec8a6a"/><ellipse cx="3.5" cy="8.1" rx="1.4" ry="1.5" fill="#ec8a6a"/><ellipse cx="3.5" cy="10.9" rx="1.4" ry="1.5" fill="#ec8a6a"/><ellipse cx="3.5" cy="13.7" rx="1.4" ry="1.5" fill="#ec8a6a"/><ellipse cx="6.8" cy="3.8" rx="1.4" ry="1.5" fill="#ec8a6a"/><ellipse cx="6.8" cy="6.6" rx="1.4" ry="1.5" fill="#ec8a6a"/><ellipse cx="6.8" cy="9.4" rx="1.4" ry="1.5" fill="#ec8a6a"/><ellipse cx="6.8" cy="12.2" rx="1.4" ry="1.5" fill="#ec8a6a"/><ellipse cx="6.8" cy="15.0" rx="1.4" ry="1.5" fill="#ec8a6a"/><ellipse cx="10.1" cy="2.5" rx="1.4" ry="1.5" fill="#ec8a6a"/><ellipse cx="10.1" cy="5.3" rx="1.4" ry="1.5" fill="#ec8a6a"/><ellipse cx="10.1" cy="8.1" rx="1.4" ry="1.5" fill="#ec8a6a"/><ellipse cx="10.1" cy="10.9" rx="1.4" ry="1.5" fill="#ec8a6a"/><ellipse cx="10.1" cy="13.7" rx="1.4" ry="1.5" fill="#ec8a6a"/><ellipse cx="13.4" cy="3.8" rx="1.4" ry="1.5" fill="#ec8a6a"/><ellipse cx="13.4" cy="6.6" rx="1.4" ry="1.5" fill="#ec8a6a"/><ellipse cx="13.4" cy="9.4" rx="1.4" ry="1.5" fill="#ec8a6a"/><ellipse cx="13.4" cy="12.2" rx="1.4" ry="1.5" fill="#ec8a6a"/><ellipse cx="13.4" cy="15.0" rx="1.4" ry="1.5" fill="#ec8a6a"/><circle cx="9" cy="8.5" r="1.2" fill="#e01818"/></svg>
<div class="t" style="left:1765px;top:784px;font-size:12px;color:#e4e4e4">新增圖樣</div>
<div class="a" style="left:1882px;top:783px;width:12px;height:12px;border:1.4px solid #cfcfcf;border-radius:50%"></div>
<svg class="a" style="left:1905px;top:779px" width="8" height="8"><path d="M0,0 L7,0 L7,7Z" fill="#dcdcdc"/></svg>
<svg class="a" style="left:1772px;top:1022px" width="125" height="15"><circle cx="13" cy="5.5" r="4" fill="none" stroke="#666" stroke-width="1.2"/><path d="M10,8.5 L6,13" stroke="#666" stroke-width="1.5"/><rect x="29" y="2" width="8" height="8" fill="none" stroke="#666"/><rect x="32" y="5" width="8" height="8" fill="#555" stroke="#666"/><path d="M57,3 L65,3 L65,12 M57,3 L59,1 M57,3 L59,5" fill="none" stroke="#666" stroke-width="1.2"/><rect x="60" y="6" width="7" height="7" fill="#666"/><path d="M82,5 L90,5 L90,13 L82,13Z" fill="#666"/><path d="M108,4 L120,4 M110,4 L111,13 L117,13 L118,4 M112,2 L116,2" fill="none" stroke="#666" stroke-width="1.3"/></svg>
<div class="a" style="left:0;top:1040px;width:1920px;height:2px;background:#d6dade"></div>
</body></html>
